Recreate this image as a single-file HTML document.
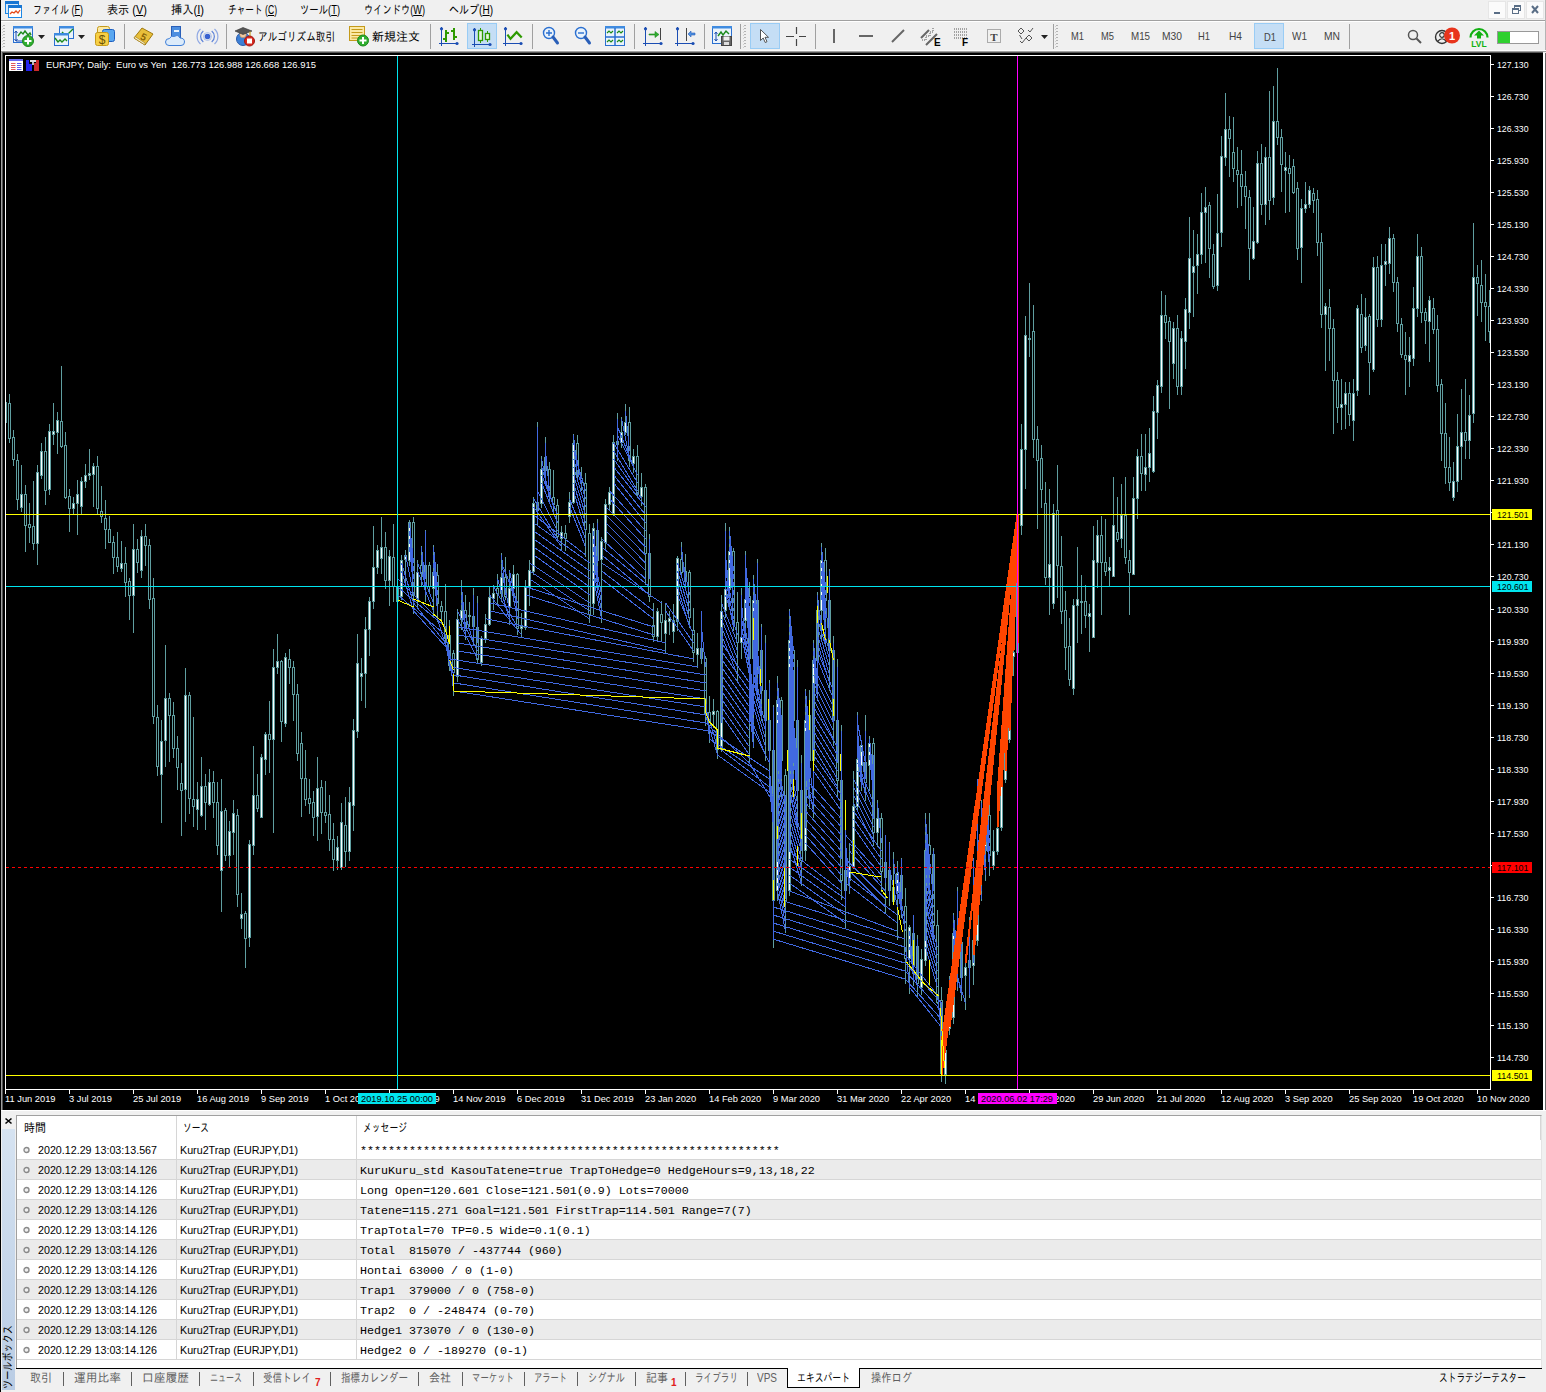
<!DOCTYPE html>
<html lang="ja"><head><meta charset="utf-8"><title>EURJPY,Daily</title>
<style>
html,body{margin:0;padding:0;}
body{width:1546px;height:1392px;position:relative;overflow:hidden;background:#f0f0f0;font-family:'Liberation Sans','IPAGothic',sans-serif;}
.t{position:absolute;white-space:pre;transform-origin:0 0;display:block;}
svg{position:absolute;overflow:visible;}
</style></head><body>
<div style="position:absolute;left:0px;top:0px;width:1546px;height:1392px;background:#f0f0f0;"></div>
<div style="position:absolute;left:1px;top:20px;width:1545px;height:1px;background:#a0a0a0;"></div>
<div style="position:absolute;left:1px;top:21px;width:1545px;height:1px;background:#ffffff;"></div>
<div style="position:absolute;left:0px;top:0px;width:1px;height:1392px;background:#000;"></div>
<svg style="left:5px;top:1px" width="18" height="18" viewBox="0 0 18 18">
<rect x="0.5" y="0.5" width="13" height="12" fill="#dbeaf8" stroke="#1e88e5"/><rect x="0" y="0" width="14" height="3" fill="#1976d2"/>
<rect x="3.5" y="4.5" width="13" height="12" fill="#ffffff" stroke="#1e88e5"/><rect x="3" y="4" width="14" height="3" fill="#1976d2"/>
<polyline points="5,13 7,11 9,12 11,10 13,12 15,9" fill="none" stroke="#e64a19" stroke-width="1.3"/></svg>
<div style="position:absolute;left:1488px;top:1px;width:18px;height:18px;background:#fbfbfb;border:1px solid #e6e6e6;box-sizing:border-box;"></div>
<div style="position:absolute;left:1507px;top:1px;width:18px;height:18px;background:#fbfbfb;border:1px solid #e6e6e6;box-sizing:border-box;"></div>
<div style="position:absolute;left:1526px;top:1px;width:18px;height:18px;background:#fbfbfb;border:1px solid #e6e6e6;box-sizing:border-box;"></div>
<div style="position:absolute;left:1545px;top:0px;width:1px;height:52px;background:#b4b4b4;"></div>
<svg style="left:1489px;top:2px" width="56" height="16" viewBox="0 0 56 16">
<rect x="5" y="10" width="6" height="2" fill="#5a6e86"/>
<rect x="25.5" y="3.5" width="6" height="5" fill="none" stroke="#5a6e86"/><rect x="25" y="3" width="7" height="2" fill="#5a6e86"/>
<rect x="23.5" y="6.5" width="6" height="5" fill="#fafafa" stroke="#5a6e86"/><rect x="23" y="6" width="7" height="2" fill="#5a6e86"/>
<path d="M43 4 L49 11 M49 4 L43 11" stroke="#5a6e86" stroke-width="2"/></svg>
<svg style="left:2px;top:25px" width="3" height="24" viewBox="0 0 3 24" ><rect x="1" y="0" width="2" height="1" fill="#b4b4b4"/><rect x="0" y="1" width="1" height="1" fill="#d0d0d0"/><rect x="1" y="3" width="2" height="1" fill="#b4b4b4"/><rect x="0" y="4" width="1" height="1" fill="#d0d0d0"/><rect x="1" y="6" width="2" height="1" fill="#b4b4b4"/><rect x="0" y="7" width="1" height="1" fill="#d0d0d0"/><rect x="1" y="9" width="2" height="1" fill="#b4b4b4"/><rect x="0" y="10" width="1" height="1" fill="#d0d0d0"/><rect x="1" y="12" width="2" height="1" fill="#b4b4b4"/><rect x="0" y="13" width="1" height="1" fill="#d0d0d0"/><rect x="1" y="15" width="2" height="1" fill="#b4b4b4"/><rect x="0" y="16" width="1" height="1" fill="#d0d0d0"/><rect x="1" y="18" width="2" height="1" fill="#b4b4b4"/><rect x="0" y="19" width="1" height="1" fill="#d0d0d0"/><rect x="1" y="21" width="2" height="1" fill="#b4b4b4"/><rect x="0" y="22" width="1" height="1" fill="#d0d0d0"/></svg>
<svg style="left:743px;top:25px" width="3" height="24" viewBox="0 0 3 24" ><rect x="1" y="0" width="2" height="1" fill="#b4b4b4"/><rect x="0" y="1" width="1" height="1" fill="#d0d0d0"/><rect x="1" y="3" width="2" height="1" fill="#b4b4b4"/><rect x="0" y="4" width="1" height="1" fill="#d0d0d0"/><rect x="1" y="6" width="2" height="1" fill="#b4b4b4"/><rect x="0" y="7" width="1" height="1" fill="#d0d0d0"/><rect x="1" y="9" width="2" height="1" fill="#b4b4b4"/><rect x="0" y="10" width="1" height="1" fill="#d0d0d0"/><rect x="1" y="12" width="2" height="1" fill="#b4b4b4"/><rect x="0" y="13" width="1" height="1" fill="#d0d0d0"/><rect x="1" y="15" width="2" height="1" fill="#b4b4b4"/><rect x="0" y="16" width="1" height="1" fill="#d0d0d0"/><rect x="1" y="18" width="2" height="1" fill="#b4b4b4"/><rect x="0" y="19" width="1" height="1" fill="#d0d0d0"/><rect x="1" y="21" width="2" height="1" fill="#b4b4b4"/><rect x="0" y="22" width="1" height="1" fill="#d0d0d0"/></svg>
<svg style="left:1055px;top:25px" width="3" height="24" viewBox="0 0 3 24" ><rect x="1" y="0" width="2" height="1" fill="#b4b4b4"/><rect x="0" y="1" width="1" height="1" fill="#d0d0d0"/><rect x="1" y="3" width="2" height="1" fill="#b4b4b4"/><rect x="0" y="4" width="1" height="1" fill="#d0d0d0"/><rect x="1" y="6" width="2" height="1" fill="#b4b4b4"/><rect x="0" y="7" width="1" height="1" fill="#d0d0d0"/><rect x="1" y="9" width="2" height="1" fill="#b4b4b4"/><rect x="0" y="10" width="1" height="1" fill="#d0d0d0"/><rect x="1" y="12" width="2" height="1" fill="#b4b4b4"/><rect x="0" y="13" width="1" height="1" fill="#d0d0d0"/><rect x="1" y="15" width="2" height="1" fill="#b4b4b4"/><rect x="0" y="16" width="1" height="1" fill="#d0d0d0"/><rect x="1" y="18" width="2" height="1" fill="#b4b4b4"/><rect x="0" y="19" width="1" height="1" fill="#d0d0d0"/><rect x="1" y="21" width="2" height="1" fill="#b4b4b4"/><rect x="0" y="22" width="1" height="1" fill="#d0d0d0"/></svg>
<div style="position:absolute;left:124px;top:24px;width:1px;height:25px;background:#a0a0a0;"></div>
<div style="position:absolute;left:226px;top:24px;width:1px;height:25px;background:#a0a0a0;"></div>
<div style="position:absolute;left:430px;top:24px;width:1px;height:25px;background:#a0a0a0;"></div>
<div style="position:absolute;left:532px;top:24px;width:1px;height:25px;background:#a0a0a0;"></div>
<div style="position:absolute;left:634px;top:24px;width:1px;height:25px;background:#a0a0a0;"></div>
<div style="position:absolute;left:704px;top:24px;width:1px;height:25px;background:#a0a0a0;"></div>
<div style="position:absolute;left:740px;top:24px;width:1px;height:25px;background:#a0a0a0;"></div>
<div style="position:absolute;left:815px;top:24px;width:1px;height:25px;background:#a0a0a0;"></div>
<div style="position:absolute;left:1053px;top:24px;width:1px;height:25px;background:#a0a0a0;"></div>
<div style="position:absolute;left:1349px;top:24px;width:1px;height:25px;background:#a0a0a0;"></div>
<svg style="left:38px;top:35px" width="7" height="4" viewBox="0 0 7 4" ><path d="M0 0H7L3.5 4Z" fill="#222"/></svg>
<svg style="left:78px;top:35px" width="7" height="4" viewBox="0 0 7 4" ><path d="M0 0H7L3.5 4Z" fill="#222"/></svg>
<svg style="left:1041px;top:35px" width="7" height="4" viewBox="0 0 7 4" ><path d="M0 0H7L3.5 4Z" fill="#222"/></svg>
<svg style="left:13px;top:26px" width="21" height="21" viewBox="0 0 21 21" ><rect x="0.5" y="0.5" width="19" height="16" fill="#eaf3fb" stroke="#2a6fd0"/><rect x="0" y="0" width="20" height="2.5" fill="#3f8be0"/>
<path d="M3 5V15M1.5 7L3 5L4.5 7M1.5 13L3 15L4.5 13" stroke="#1d4fb0" fill="none"/><path d="M3 15H12" stroke="#1d4fb0"/>
<polyline points="5,10 8,6 10,8 12,5 15,9 17,7 18,9" fill="none" stroke="#1c8a1c" stroke-width="1.4"/>
<circle cx="15" cy="15" r="5.5" fill="#2fae2f" stroke="#1e8a1e"/><path d="M15 11.5V18.5M11.5 15H18.5" stroke="#fff" stroke-width="2"/></svg>
<svg style="left:54px;top:26px" width="21" height="21" viewBox="0 0 21 21" ><rect x="5.5" y="0.5" width="14" height="12" fill="#eaf3fb" stroke="#2a6fd0"/><rect x="5" y="0" width="15" height="2.5" fill="#3f8be0"/>
<polyline points="8,6 11,9 14,8 19,3" fill="none" stroke="#1c8a1c" stroke-width="1.4"/>
<rect x="0.5" y="7.5" width="14" height="12" fill="#eaf3fb" stroke="#2a6fd0"/><rect x="0" y="7" width="15" height="2.5" fill="#3f8be0"/>
<polyline points="1,12 4,16 6,14 8,16 11,13 13,15" fill="none" stroke="#1c8a1c" stroke-width="1.4"/></svg>
<svg style="left:95px;top:26px" width="21" height="21" viewBox="0 0 21 21" ><rect x="2.5" y="0.5" width="12" height="12" rx="2" fill="#fbe9a6" stroke="#c49a1a"/>
<rect x="7.5" y="3.5" width="12" height="12" rx="2" fill="#5aa7f0" stroke="#1d5fc0"/>
<rect x="0.5" y="6.5" width="13" height="13" rx="2" fill="#f7cf45" stroke="#c49a1a"/>
<text x="7" y="17.5" font-family="Liberation Sans, sans-serif" font-size="12" text-anchor="middle" fill="#6b5208">$</text></svg>
<svg style="left:133px;top:26px" width="21" height="21" viewBox="0 0 21 21" ><path d="M1 12L9 2L20 8L12 19Z" fill="#e8bf3a" stroke="#a07a10"/><path d="M1 12L12 19L12 17L2 10.5Z" fill="#f6ecc8" stroke="#a07a10" stroke-width="0.6"/>
<text x="10.5" y="14.5" font-family="Liberation Sans, sans-serif" font-size="10" font-weight="bold" text-anchor="middle" fill="#8a6408" transform="rotate(28 10.5 11)">5</text></svg>
<svg style="left:165px;top:26px" width="21" height="21" viewBox="0 0 21 21" ><rect x="6.500" y="0.500" width="9" height="11" fill="#4d8fe0" stroke="#2a5fb8"/><rect x="9" y="4" width="5" height="2" fill="#eaf3fb"/>
<path d="M4 19.500Q0.500 19.500 0.500 16Q0.500 12.500 4.500 12.500Q6 9 9.500 10.500Q13 8 15 12Q19.500 12 19.500 16Q19.500 19.500 16 19.500Z" fill="#dcebfa" stroke="#3f7fd8"/></svg>
<svg style="left:197px;top:26px" width="21" height="21" viewBox="0 0 21 21" ><circle cx="10.5" cy="10.5" r="2.8" fill="#3a62d0"/><circle cx="10.5" cy="10.5" r="4" fill="none" stroke="#9db4e8" stroke-width="0.8"/>
<path d="M6.300 5A7 7 0 0 0 6.300 16M14.700 5A7 7 0 0 1 14.700 16" fill="none" stroke="#5d82d8" stroke-width="1.2"/>
<path d="M3.500 3A10 10 0 0 0 3.500 18M17.500 3A10 10 0 0 1 17.500 18" fill="none" stroke="#8fa8e4" stroke-width="1.2"/></svg>
<svg style="left:234px;top:26px" width="22" height="21" viewBox="0 0 22 21" ><circle cx="9" cy="13" r="6.5" fill="#3b7fd6" stroke="#2a5aa8"/><circle cx="9" cy="8.500" r="3.200" fill="#f2c9a0" stroke="#b98a58" stroke-width="0.6"/>
<path d="M1 5L9 1.500L18 5L9 8.500Z" fill="#555" stroke="#333" stroke-width="0.6"/><path d="M16 5.500V10" stroke="#caa21a" stroke-width="1.2"/>
<circle cx="15.500" cy="15" r="5" fill="#d8281e" stroke="#a01810"/><rect x="13" y="12.500" width="5" height="5" fill="#fff"/></svg>
<svg style="left:349px;top:26px" width="21" height="21" viewBox="0 0 21 21" ><rect x="0.500" y="0.500" width="15" height="14" fill="#fbe9a6" stroke="#c49a1a"/>
<path d="M2.500 3.500H13.500M2.500 6.500H13.500M2.500 9.500H13.500M2.500 12H9" stroke="#c49a1a"/>
<circle cx="14" cy="14.500" r="5.500" fill="#2fae2f" stroke="#1e8a1e"/><path d="M14 11V18M10.500 14.500H17.500" stroke="#fff" stroke-width="2"/></svg>
<svg style="left:439px;top:26px" width="21" height="21" viewBox="0 0 21 21" ><path d="M2.500 1V20M0 17.500H19" stroke="#1a4db3"/><circle cx="2.500" cy="2.800" r="1.600" fill="#1a4db3"/><circle cx="18" cy="17.500" r="1.600" fill="#1a4db3"/>
<path d="M7 4V16M8 7H10M4 13H6M15 2V14M12 5H14M16 11H18" stroke="#2e9a00" stroke-width="2"/></svg>
<div style="position:absolute;left:467px;top:23px;width:30px;height:26px;background:#c5def5;border:1px solid #99ccf5;box-sizing:border-box;"></div>
<svg style="left:472px;top:27px" width="21" height="21" viewBox="0 0 21 21" ><path d="M2.500 1V20M0 17.500H19" stroke="#1a4db3"/><circle cx="2.500" cy="2.800" r="1.600" fill="#1a4db3"/><circle cx="18" cy="17.500" r="1.600" fill="#1a4db3"/>
<path d="M8.500 1V16M15.500 4V15" stroke="#2e9a00"/><rect x="6.500" y="3.500" width="4" height="10" fill="#e8f5e0" stroke="#2e9a00" stroke-width="1.300"/><rect x="13.500" y="6.500" width="4" height="6" fill="#e8f5e0" stroke="#2e9a00" stroke-width="1.300"/></svg>
<svg style="left:503px;top:26px" width="21" height="21" viewBox="0 0 21 21" ><path d="M2.500 1V20M0 17.500H19" stroke="#1a4db3"/><circle cx="2.500" cy="2.800" r="1.600" fill="#1a4db3"/><circle cx="18" cy="17.500" r="1.600" fill="#1a4db3"/>
<polyline points="4.400,8.700 7.500,12.800 13.600,6.200 18.700,11.500" fill="none" stroke="#2e9a00" stroke-width="2.200"/></svg>
<svg style="left:542px;top:26px" width="18" height="21" viewBox="0 0 18 21" ><circle cx="7" cy="7" r="5.500" fill="#eaf3fb" stroke="#2a6fd0" stroke-width="1.400"/><path d="M11 11L15.500 17" stroke="#2a5fb8" stroke-width="3" stroke-linecap="round"/>
<path d="M4 7H10M7 4V10" stroke="#2a6fd0" stroke-width="1.400"/></svg>
<svg style="left:574px;top:26px" width="18" height="21" viewBox="0 0 18 21" ><circle cx="7" cy="7" r="5.500" fill="#eaf3fb" stroke="#2a6fd0" stroke-width="1.400"/><path d="M11 11L15.500 17" stroke="#2a5fb8" stroke-width="3" stroke-linecap="round"/>
<path d="M4 7H10" stroke="#2a6fd0" stroke-width="1.400"/></svg>
<svg style="left:605px;top:26px" width="21" height="21" viewBox="0 0 21 21" ><rect x="0.500" y="0.500" width="19" height="19" fill="#eaf3fb" stroke="#2a6fd0"/><rect x="0" y="0" width="20" height="2.500" fill="#3f8be0"/>
<path d="M10 2V20M0 11H20" stroke="#2a6fd0" stroke-width="1.500"/>
<polyline points="2,7 4,5 6,7 8,5" fill="none" stroke="#1c8a1c" stroke-width="1.200"/><polyline points="12,7 14,5 16,7 18,5" fill="none" stroke="#1c8a1c" stroke-width="1.200"/>
<polyline points="2,16 4,14 6,16 8,14" fill="none" stroke="#1c8a1c" stroke-width="1.200"/><polyline points="12,16 14,14 16,16 18,14" fill="none" stroke="#1c8a1c" stroke-width="1.200"/></svg>
<svg style="left:643px;top:26px" width="22" height="21" viewBox="0 0 22 21" ><path d="M2.500 1V20M0 17.500H19" stroke="#1a4db3"/><circle cx="2.500" cy="2.800" r="1.600" fill="#1a4db3"/><circle cx="18" cy="17.500" r="1.600" fill="#1a4db3"/>
<path d="M17.500 2V14" stroke="#444"/><path d="M6 8H12V5.500L16 8.500L12 11.500V9H6Z" fill="#2fae2f" stroke="#1e8a1e" stroke-width="0.600"/></svg>
<svg style="left:675px;top:26px" width="22" height="21" viewBox="0 0 22 21" ><path d="M2.500 1V20M0 17.500H19" stroke="#1a4db3"/><circle cx="2.500" cy="2.800" r="1.600" fill="#1a4db3"/><circle cx="18" cy="17.500" r="1.600" fill="#1a4db3"/>
<path d="M11.500 2V15" stroke="#444"/><path d="M20 7H16V5L13 8L16 11V9H20Z" fill="#4d8fe0" stroke="#2a5fb8" stroke-width="0.600"/></svg>
<svg style="left:712px;top:26px" width="22" height="21" viewBox="0 0 22 21" ><rect x="0.500" y="0.500" width="19" height="17" fill="#eaf3fb" stroke="#2a6fd0"/><rect x="0" y="0" width="20" height="2.500" fill="#3f8be0"/>
<path d="M4 6V15M2.500 8L4 6L5.500 8M2.500 13L4 15L5.500 13" stroke="#1d4fb0" fill="none"/>
<polyline points="6,10 9,6 11,9 14,5 17,8" fill="none" stroke="#1c8a1c" stroke-width="1.400"/>
<rect x="9.500" y="10.500" width="10" height="9" fill="#666" stroke="#444"/><rect x="11.500" y="10.500" width="6" height="4" fill="#eee"/><rect x="12" y="16" width="5" height="3" fill="#ddd"/></svg>
<div style="position:absolute;left:750px;top:23px;width:30px;height:26px;background:#c5def5;border:1px solid #99ccf5;box-sizing:border-box;"></div>
<svg style="left:759px;top:29px" width="12" height="16" viewBox="0 0 12 16" ><path d="M1.500 0.500V11.500L4.200 9L6.200 13.500L8 12.700L6 8.300H9.500Z" fill="#fff" stroke="#444" stroke-width="0.900"/></svg>
<svg style="left:786px;top:26px" width="21" height="21" viewBox="0 0 21 21" ><path d="M10.500 1V8M10.500 13V20M0 10.500H8M13 10.500H20" stroke="#444" stroke-width="1.200"/></svg>
<div style="position:absolute;left:833px;top:29px;width:2px;height:14px;background:#666;"></div>
<div style="position:absolute;left:859px;top:35px;width:14px;height:2px;background:#666;"></div>
<svg style="left:891px;top:29px" width="14" height="14" viewBox="0 0 14 14" shape-rendering="geometricPrecision"><path d="M1 13L13 1" stroke="#666" stroke-width="2"/></svg>
<svg style="left:920px;top:26px" width="22" height="21" viewBox="0 0 22 21" ><path d="M1 12L9 4M6 19L17 8" stroke="#666" stroke-width="2"/><path d="M2 14L6 14L6 10L10 10L10 6L13 6L13 1" fill="none" stroke="#555" stroke-dasharray="1 1"/>
<text x="14" y="20" font-family="Liberation Sans, sans-serif" font-size="10" font-weight="bold" fill="#000">E</text></svg>
<svg style="left:954px;top:28px" width="17" height="18" viewBox="0 0 17 18" ><path d="M0 1H13M0 4H13M0 7H13M0 10H13" stroke="#555" stroke-dasharray="1 1"/>
<text x="8" y="18" font-family="Liberation Sans, sans-serif" font-size="10" font-weight="bold" fill="#000">F</text></svg>
<svg style="left:987px;top:29px" width="15" height="15" viewBox="0 0 15 15" ><rect x="0.500" y="0.500" width="13" height="13" fill="none" stroke="#666" stroke-dasharray="1 1"/>
<text x="7" y="11.500" font-family="Liberation Serif, serif" font-size="11" font-weight="bold" text-anchor="middle" fill="#444">T</text></svg>
<svg style="left:1017px;top:27px" width="18" height="18" viewBox="0 0 18 18" ><path d="M1 4L4 1L7 4L4 7Z M2.500 8L5 12" fill="none" stroke="#555"/><path d="M9 11L12 8L15 11L12 14Z" fill="none" stroke="#555"/>
<path d="M3 14L5 16L9 11" fill="none" stroke="#555"/><path d="M11 3L13 5L16 1" fill="none" stroke="#555"/></svg>
<div style="position:absolute;left:1254px;top:23px;width:30px;height:26px;background:#c5def5;border:1px solid #99ccf5;box-sizing:border-box;"></div>
<svg style="left:1407px;top:29px" width="16" height="16" viewBox="0 0 16 16" ><circle cx="6" cy="6" r="4.500" fill="none" stroke="#555" stroke-width="1.500"/><path d="M9.500 9.500L14 14" stroke="#555" stroke-width="2"/></svg>
<svg style="left:1434px;top:27px" width="28" height="20" viewBox="0 0 28 20" ><circle cx="8" cy="10" r="6.500" fill="none" stroke="#333" stroke-width="1.400"/><circle cx="8" cy="8" r="2.300" fill="none" stroke="#333" stroke-width="1.200"/>
<path d="M3.500 14.500Q8 9 12.500 14.500" fill="none" stroke="#333" stroke-width="1.200"/>
<circle cx="18" cy="8.500" r="8" fill="#e8341c"/><text x="18" y="12.500" font-family="Liberation Sans, sans-serif" font-size="11" font-weight="bold" text-anchor="middle" fill="#fff">1</text></svg>
<svg style="left:1469px;top:26px" width="20" height="22" viewBox="0 0 20 22" shape-rendering="geometricPrecision"><path d="M1.500 11.500A8.500 8.500 0 0 1 18.500 11.500" fill="none" stroke="#12b012" stroke-width="2.200"/><path d="M10 4.500L5 9.500H8V12.500H12V9.500H15Z" fill="#12b012"/>
<text x="10" y="21" font-family="Liberation Sans, sans-serif" font-size="8.500" font-weight="bold" text-anchor="middle" fill="#12b012">LVL</text></svg>
<div style="position:absolute;left:1497px;top:31px;width:42px;height:13px;background:#fff;border:1px solid #999;box-sizing:border-box;"></div>
<div style="position:absolute;left:1498px;top:32px;width:12px;height:11px;background:#2fd02f;"></div>
<div style="position:absolute;left:1px;top:50px;width:1545px;height:1px;background:#fafafa;"></div>
<div style="position:absolute;left:1px;top:51px;width:1545px;height:1px;background:#a0a0a0;"></div>
<div style="position:absolute;left:2px;top:52px;width:1541px;height:1px;background:#555;"></div>
<div style="position:absolute;left:2px;top:53px;width:1541px;height:1057px;background:#000;"></div>
<div style="position:absolute;left:1px;top:52px;width:1px;height:1058px;background:#a0a0a0;"></div>
<div style="position:absolute;left:2px;top:53px;width:1px;height:1057px;background:#555;"></div>
<div style="position:absolute;left:1543px;top:53px;width:2px;height:1057px;background:#fff;"></div>
<div style="position:absolute;left:1545px;top:53px;width:1px;height:1057px;background:#696969;"></div>
<div style="position:absolute;left:1px;top:1110px;width:1545px;height:1px;background:#fff;"></div>
<svg style="left:0;top:0" width="1546" height="1392" viewBox="0 0 1546 1392" shape-rendering="crispEdges"><path d="M5.500 1089.500V55.500H1490.500V1089.500Z" fill="none" stroke="#fff"/><path d="M1491 64.5h3M1491 96.5h3M1491 128.5h3M1491 160.5h3M1491 192.5h3M1491 224.5h3M1491 256.5h3M1491 288.5h3M1491 320.5h3M1491 352.5h3M1491 384.5h3M1491 416.5h3M1491 448.5h3M1491 480.5h3M1491 512.5h3M1491 544.5h3M1491 576.5h3M1491 609.5h3M1491 641.5h3M1491 673.5h3M1491 705.5h3M1491 737.5h3M1491 769.5h3M1491 801.5h3M1491 833.5h3M1491 865.5h3M1491 897.5h3M1491 929.5h3M1491 961.5h3M1491 993.5h3M1491 1025.5h3M1491 1057.5h3" stroke="#fff"/><path d="M5.5 1090v4M69.5 1090v4M133.5 1090v4M197.5 1090v4M261.5 1090v4M325.5 1090v4M389.5 1090v4M453.5 1090v4M517.5 1090v4M581.5 1090v4M645.5 1090v4M709.5 1090v4M773.5 1090v4M837.5 1090v4M901.5 1090v4M965.5 1090v4M1029.5 1090v4M1093.5 1090v4M1157.5 1090v4M1221.5 1090v4M1285.5 1090v4M1349.5 1090v4M1413.5 1090v4M1477.5 1090v4" stroke="#fff"/><svg x="6" y="56" width="1484" height="1033" viewBox="6 56 1484 1033" style="overflow:hidden;position:static"><path d="M4 402h3v21h-3zM8 403h3v36h-3zM12 437h3v23h-3zM16 460h3v40h-3zM20 494h3v14h-3zM24 494h3v32h-3zM28 524h3v4h-3zM32 526h3v18h-3zM36 472h3v72h-3zM40 451h3v25h-3zM44 451h3v40h-3zM48 431h3v59h-3zM52 431h3v4h-3zM56 420h3v13h-3zM60 421h3v26h-3zM64 445h3v53h-3zM68 496h3v13h-3zM72 503h3v6h-3zM76 494h3v10h-3zM80 481h3v26h-3zM84 475h3v7h-3zM88 473h3v3h-3zM92 466h3v9h-3zM96 466h3v43h-3zM100 511h3v6h-3zM104 518h3v12h-3zM108 529h3v14h-3zM112 542h3v16h-3zM116 557h3v10h-3zM120 563h3v6h-3zM124 563h3v20h-3zM128 581h3v15h-3zM132 549h3v47h-3zM136 549h3v14h-3zM140 536h3v35h-3zM144 536h3v10h-3zM148 545h3v55h-3zM152 598h3v119h-3zM156 717h3v50h-3zM160 741h3v34h-3zM164 698h3v43h-3zM168 698h3v18h-3zM172 715h3v34h-3zM176 748h3v20h-3zM180 783h3v8h-3zM184 695h3v95h-3zM188 695h3v104h-3zM192 799h3v8h-3zM196 799h3v11h-3zM200 786h3v30h-3zM204 786h3v17h-3zM208 782h3v23h-3zM212 782h3v21h-3zM216 802h3v44h-3zM220 811h3v60h-3zM224 810h3v46h-3zM228 831h3v25h-3zM232 813h3v20h-3zM236 815h3v80h-3zM240 914h3v5h-3zM244 913h3v26h-3zM248 844h3v94h-3zM252 795h3v51h-3zM256 795h3v14h-3zM260 757h3v61h-3zM264 734h3v26h-3zM268 734h3v6h-3zM272 667h3v73h-3zM276 661h3v7h-3zM280 661h3v61h-3zM284 657h3v67h-3zM288 659h3v9h-3zM292 667h3v28h-3zM296 694h3v60h-3zM300 743h3v36h-3zM304 778h3v22h-3zM308 798h3v6h-3zM312 802h3v16h-3zM316 788h3v29h-3zM320 787h3v26h-3zM324 812h3v4h-3zM328 814h3v26h-3zM332 839h3v21h-3zM336 847h3v14h-3zM340 822h3v46h-3zM344 825h3v27h-3zM348 802h3v50h-3zM352 730h3v76h-3zM356 663h3v69h-3zM360 673h3v4h-3zM364 629h3v45h-3zM368 601h3v29h-3zM372 567h3v35h-3zM376 550h3v18h-3zM380 547h3v12h-3zM384 547h3v34h-3zM388 556h3v25h-3zM392 557h3v30h-3zM396 586h3v16h-3zM400 560h3v37h-3zM404 555h3v5h-3zM408 522h3v39h-3zM412 522h3v74h-3zM416 572h3v27h-3zM420 565h3v9h-3zM424 565h3v22h-3zM428 565h3v22h-3zM432 572h3v17h-3zM436 575h3v29h-3zM440 606h3v6h-3zM444 611h3v28h-3zM448 635h3v31h-3zM452 653h3v20h-3zM456 619h3v58h-3zM460 610h3v10h-3zM464 610h3v21h-3zM468 615h3v2h-3zM472 616h3v11h-3zM476 627h3v33h-3zM480 638h3v25h-3zM484 624h3v15h-3zM488 597h3v28h-3zM492 593h3v6h-3zM496 588h3v6h-3zM500 577h3v17h-3zM504 577h3v20h-3zM508 588h3v19h-3zM512 574h3v15h-3zM516 574h3v55h-3zM520 626h3v3h-3zM524 587h3v41h-3zM528 570h3v18h-3zM532 503h3v69h-3zM536 502h3v9h-3zM540 469h3v35h-3zM544 457h3v14h-3zM548 469h3v28h-3zM552 497h3v8h-3zM556 505h3v32h-3zM560 532h3v7h-3zM564 533h3v6h-3zM568 502h3v15h-3zM572 443h3v60h-3zM576 443h3v32h-3zM580 478h3v5h-3zM584 483h3v47h-3zM588 533h3v82h-3zM592 528h3v76h-3zM596 530h3v31h-3zM600 541h3v19h-3zM604 504h3v39h-3zM608 492h3v13h-3zM612 442h3v72h-3zM616 441h3v4h-3zM620 432h3v11h-3zM624 422h3v11h-3zM628 422h3v39h-3zM632 456h3v8h-3zM636 456h3v39h-3zM640 487h3v10h-3zM644 487h3v67h-3zM648 553h3v44h-3zM652 625h3v12h-3zM656 611h3v26h-3zM660 614h3v9h-3zM664 620h3v14h-3zM668 618h3v4h-3zM672 620h3v12h-3zM676 558h3v64h-3zM680 559h3v14h-3zM684 571h3v7h-3zM688 572h3v46h-3zM692 630h3v23h-3zM696 648h3v7h-3zM700 648h3v11h-3zM704 658h3v56h-3zM708 712h3v14h-3zM712 711h3v4h-3zM716 711h3v39h-3zM720 611h3v138h-3zM724 589h3v22h-3zM728 551h3v39h-3zM732 551h3v72h-3zM736 622h3v21h-3zM740 637h3v6h-3zM744 599h3v22h-3zM748 596h3v63h-3zM752 600h3v59h-3zM756 600h3v51h-3zM760 650h3v41h-3zM764 690h3v31h-3zM768 720h3v31h-3zM772 750h3v151h-3zM776 700h3v191h-3zM780 700h3v61h-3zM784 775h3v126h-3zM788 640h3v251h-3zM792 650h3v71h-3zM796 720h3v71h-3zM800 790h3v71h-3zM804 720h3v131h-3zM808 715h3v46h-3zM812 660h3v101h-3zM816 610h3v51h-3zM820 560h3v51h-3zM824 560h3v41h-3zM828 600h3v51h-3zM832 650h3v71h-3zM836 720h3v61h-3zM840 780h3v101h-3zM844 870h3v21h-3zM848 866h3v15h-3zM852 806h3v61h-3zM856 759h3v48h-3zM860 745h3v21h-3zM864 762h3v21h-3zM868 743h3v23h-3zM872 743h3v90h-3zM876 818h3v15h-3zM880 818h3v54h-3zM884 862h3v16h-3zM888 870h3v21h-3zM892 887h3v15h-3zM896 873h3v20h-3zM900 875h3v24h-3zM904 906h3v53h-3zM908 927h3v32h-3zM912 933h3v33h-3zM916 946h3v38h-3zM920 959h3v29h-3zM924 850h3v111h-3zM928 845h3v10h-3zM932 854h3v72h-3zM936 925h3v78h-3zM940 1000h3v74h-3zM944 1050h3v25h-3zM948 1020h3v9h-3zM952 933h3v85h-3zM956 933h3v30h-3zM960 942h3v36h-3zM964 967h3v9h-3zM968 960h3v8h-3zM972 940h3v26h-3zM976 870h3v71h-3zM980 850h3v23h-3zM984 830h3v21h-3zM988 815h3v41h-3zM992 851h3v15h-3zM996 828h3v24h-3zM1000 779h3v49h-3zM1004 739h3v41h-3zM1008 656h3v84h-3zM1012 652h3v5h-3zM1016 525h3v128h-3zM1020 449h3v77h-3zM1024 335h3v115h-3zM1028 338h3v2h-3zM1032 331h3v109h-3zM1036 439h3v22h-3zM1040 458h3v32h-3zM1044 503h3v75h-3zM1048 564h3v14h-3zM1052 513h3v91h-3zM1056 510h3v56h-3zM1060 566h3v46h-3zM1064 610h3v38h-3zM1068 646h3v34h-3zM1072 605h3v84h-3zM1076 599h3v7h-3zM1080 601h3v2h-3zM1084 601h3v15h-3zM1088 613h3v4h-3zM1092 560h3v78h-3zM1096 535h3v28h-3zM1100 535h3v28h-3zM1104 562h3v10h-3zM1108 567h3v4h-3zM1112 525h3v52h-3zM1116 532h3v8h-3zM1120 515h3v24h-3zM1124 515h3v43h-3zM1128 560h3v13h-3zM1132 498h3v77h-3zM1136 456h3v43h-3zM1140 456h3v18h-3zM1144 467h3v8h-3zM1148 453h3v15h-3zM1152 411h3v61h-3zM1156 385h3v28h-3zM1160 315h3v72h-3zM1164 315h3v8h-3zM1168 321h3v21h-3zM1172 328h3v36h-3zM1176 328h3v59h-3zM1180 338h3v49h-3zM1184 309h3v33h-3zM1188 258h3v55h-3zM1192 266h3v7h-3zM1196 254h3v12h-3zM1200 212h3v43h-3zM1204 207h3v6h-3zM1208 205h3v44h-3zM1212 254h3v33h-3zM1216 233h3v53h-3zM1220 156h3v77h-3zM1224 129h3v29h-3zM1228 129h3v10h-3zM1232 152h3v17h-3zM1236 170h3v5h-3zM1240 174h3v13h-3zM1244 186h3v11h-3zM1248 197h3v52h-3zM1252 241h3v18h-3zM1256 163h3v80h-3zM1260 163h3v42h-3zM1264 157h3v48h-3zM1268 157h3v44h-3zM1272 121h3v77h-3zM1276 121h3v17h-3zM1280 137h3v28h-3zM1284 167h3v4h-3zM1288 168h3v6h-3zM1292 166h3v27h-3zM1296 188h3v61h-3zM1300 208h3v40h-3zM1304 204h3v5h-3zM1308 190h3v15h-3zM1312 193h3v8h-3zM1316 199h3v44h-3zM1320 242h3v73h-3zM1324 306h3v9h-3zM1328 307h3v22h-3zM1332 328h3v53h-3zM1336 380h3v28h-3zM1340 404h3v4h-3zM1344 393h3v12h-3zM1348 393h3v22h-3zM1352 393h3v28h-3zM1356 308h3v83h-3zM1360 314h3v34h-3zM1364 317h3v29h-3zM1368 316h3v47h-3zM1372 267h3v103h-3zM1376 267h3v53h-3zM1380 265h3v55h-3zM1384 261h3v4h-3zM1388 238h3v26h-3zM1392 238h3v45h-3zM1396 282h3v42h-3zM1400 324h3v31h-3zM1404 355h3v5h-3zM1408 355h3v7h-3zM1412 308h3v51h-3zM1416 256h3v53h-3zM1420 256h3v57h-3zM1424 312h3v9h-3zM1428 300h3v22h-3zM1432 308h3v22h-3zM1436 329h3v57h-3zM1440 384h3v50h-3zM1444 433h3v35h-3zM1448 467h3v16h-3zM1452 481h3v17h-3zM1456 446h3v36h-3zM1460 432h3v15h-3zM1464 432h3v9h-3zM1468 415h3v26h-3zM1472 277h3v137h-3zM1476 277h3v7h-3zM1480 285h3v18h-3zM1484 302h3v5h-3zM1488 306h3v26h-3z" fill="#5f9ea0"/><path d="M5.5 402V402M5.5 422V423M9.5 394V403M9.5 438V443M13.5 430V437M13.5 459V466M17.5 454V460M17.5 499V510M21.5 465V494M21.5 507V512M25.5 485V494M25.5 525V552M29.5 503V524M29.5 527V543M33.5 481V526M33.5 543V550M37.5 465V472M37.5 543V565M41.5 443V451M41.5 475V479M45.5 437V451M45.5 490V505M49.5 424V431M49.5 489V495M53.5 403V431M53.5 434V445M57.5 412V420M57.5 432V454M61.5 366V421M61.5 446V448M65.5 432V445M65.5 497V499M69.5 489V496M69.5 508V532M73.5 497V503M73.5 508V514M77.5 480V494M77.5 503V535M81.5 477V481M81.5 506V515M85.5 464V475M85.5 481V488M89.5 449V473M89.5 475V480M93.5 463V466M93.5 474V507M97.5 456V466M97.5 508V515M101.5 486V511M101.5 516V523M105.5 500V518M105.5 529V549M109.5 516V529M109.5 542V543M113.5 536V542M113.5 557V574M117.5 532V557M117.5 566V572M121.5 541V563M121.5 568V572M125.5 547V563M125.5 582V597M129.5 578V581M129.5 595V620M133.5 524V549M133.5 595V633M137.5 539V549M137.5 562V573M141.5 530V536M141.5 570V578M145.5 524V536M145.5 545V566M149.5 539V545M149.5 599V609M153.5 578V598M153.5 716V724M157.5 705V717M157.5 766V776M161.5 720V741M161.5 774V823M165.5 645V698M165.5 740V767M169.5 693V698M169.5 715V762M173.5 702V715M173.5 748V758M177.5 736V748M177.5 767V790M181.5 763V783M181.5 790V836M185.5 668V695M185.5 789V822M189.5 692V695M189.5 798V814M193.5 717V799M193.5 806V827M197.5 782V799M197.5 809V830M201.5 757V786M201.5 815V817M205.5 774V786M205.5 802V830M209.5 769V782M209.5 804V806M213.5 771V782M213.5 802V818M217.5 782V802M217.5 845V855M221.5 779V811M221.5 870V912M225.5 808V810M225.5 855V861M229.5 821V831M229.5 855V868M233.5 800V813M233.5 832V855M237.5 809V815M237.5 894V907M241.5 893V914M241.5 918V929M245.5 911V913M245.5 938V968M249.5 840V844M249.5 937V947M253.5 746V795M253.5 845V855M257.5 774V795M257.5 808V812M261.5 754V757M261.5 817V818M265.5 732V734M265.5 759V775M269.5 701V734M269.5 739V773M273.5 649V667M273.5 739V833M277.5 634V661M277.5 667V674M281.5 660V661M281.5 721V742M285.5 653V657M285.5 723V727M289.5 649V659M289.5 667V684M293.5 661V667M293.5 694V721M297.5 684V694M297.5 753V761M301.5 732V743M301.5 778V817M305.5 750V778M305.5 799V806M309.5 779V798M309.5 803V814M313.5 791V802M313.5 817V836M317.5 757V788M317.5 816V841M321.5 780V787M321.5 812V834M325.5 781V812M325.5 815V823M329.5 795V814M329.5 839V851M333.5 823V839M333.5 859V871M337.5 836V847M337.5 860V870M341.5 803V822M341.5 867V870M345.5 797V825M345.5 851V867M349.5 787V802M349.5 851V861M353.5 719V730M353.5 805V831M357.5 634V663M357.5 731V738M361.5 658V673M361.5 676V701M365.5 617V629M365.5 673V708M369.5 597V601M369.5 629V656M373.5 526V567M373.5 601V609M377.5 545V550M377.5 567V574M381.5 517V547M381.5 558V574M385.5 532V547M385.5 580V589M389.5 550V556M389.5 580V606M393.5 524V557M393.5 586V602M397.5 576V586M397.5 601V604M401.5 555V560M401.5 596V600M405.5 550V555M405.5 559V587M409.5 520V522M409.5 560V566M413.5 517V522M413.5 595V614M417.5 560V572M417.5 598V608M421.5 546V565M421.5 573V587M425.5 530V565M425.5 586V602M429.5 562V565M429.5 586V592M433.5 545V572M433.5 588V618M437.5 564V575M437.5 603V622M441.5 601V606M441.5 611V623M445.5 584V611M445.5 638V646M449.5 620V635M449.5 665V671M453.5 650V653M453.5 672V696M457.5 609V619M457.5 676V682M461.5 580V610M461.5 619V630M465.5 595V610M465.5 630V640M469.5 602V615M469.5 616V627M473.5 588V616M473.5 626V646M477.5 596V627M477.5 659V663M481.5 636V638M481.5 662V666M485.5 614V624M485.5 638V643M489.5 587V597M489.5 624V626M493.5 585V593M493.5 598V610M497.5 574V588M497.5 593V604M501.5 553V577M501.5 593V602M505.5 557V577M505.5 596V600M509.5 570V588M509.5 606V625M513.5 565V574M513.5 588V602M517.5 573V574M517.5 628V635M521.5 613V626M521.5 628V637M525.5 580V587M525.5 627V630M529.5 560V570M529.5 587V606M533.5 497V503M533.5 571V575M537.5 422V502M537.5 510V525M541.5 456V469M541.5 503V508M545.5 437V457M545.5 470V484M549.5 462V469M549.5 496V504M553.5 470V497M553.5 504V511M557.5 499V505M557.5 536V541M561.5 526V532M561.5 538V550M565.5 525V533M565.5 538V551M569.5 492V502M569.5 516V523M573.5 434V443M573.5 502V504M577.5 435V443M577.5 474V479M581.5 467V478M581.5 482V491M585.5 473V483M585.5 529V557M589.5 524V533M589.5 614V623M593.5 523V528M593.5 603V615M597.5 519V530M597.5 560V589M601.5 537V541M601.5 559V623M605.5 499V504M605.5 542V549M609.5 487V492M609.5 504V511M613.5 435V442M613.5 513V516M617.5 413V441M617.5 444V461M621.5 417V432M621.5 442V448M625.5 404V422M625.5 432V435M629.5 407V422M629.5 460V467M633.5 449V456M633.5 463V473M637.5 445V456M637.5 494V497M641.5 473V487M641.5 496V506M645.5 484V487M645.5 553V585M649.5 534V553M649.5 596V602M653.5 603V625M653.5 636V642M657.5 608V611M657.5 636V642M661.5 601V614M661.5 622V642M665.5 603V620M665.5 633V653M669.5 611V618M669.5 621V635M673.5 604V620M673.5 631V643M677.5 556V558M677.5 621V631M681.5 542V559M681.5 572V578M685.5 554V571M685.5 577V590M689.5 570V572M689.5 617V628M693.5 608V630M693.5 652V662M697.5 633V648M697.5 654V668M701.5 611V648M701.5 658V664M705.5 656V658M705.5 713V726M709.5 696V712M709.5 725V743M713.5 699V711M713.5 714V728M717.5 710V711M717.5 749V759M721.5 595V611M721.5 748V752M725.5 523V589M725.5 610V618M729.5 527V551M729.5 589V607M733.5 548V551M733.5 622V631M737.5 592V622M737.5 642V681M741.5 588V637M741.5 642V659M745.5 551V599M745.5 620V645M749.5 582V596M749.5 658V764M753.5 575V600M753.5 658V748M757.5 559V600M757.5 650V701M761.5 624V650M761.5 690V721M765.5 635V690M765.5 720V761M769.5 680V720M769.5 750V791M773.5 705V750M773.5 900V948M777.5 676V700M777.5 890V901M781.5 697V700M781.5 760V801M785.5 769V775M785.5 900V933M789.5 609V640M789.5 890V896M793.5 646V650M793.5 720V801M797.5 660V720M797.5 790V831M801.5 755V790M801.5 860V886M805.5 689V720M805.5 850V861M809.5 690V715M809.5 760V809M813.5 640V660M813.5 760V818M817.5 592V610M817.5 660V701M821.5 543V560M821.5 610V641M825.5 548V560M825.5 600V646M829.5 569V600M829.5 650V691M833.5 636V650M833.5 720V746M837.5 659V720M837.5 780V796M841.5 725V780M841.5 880V900M845.5 818V870M845.5 890V929M849.5 843V866M849.5 880V894M853.5 771V806M853.5 866V869M857.5 712V759M857.5 806V811M861.5 740V745M861.5 765V791M865.5 715V762M865.5 782V801M869.5 736V743M869.5 765V791M873.5 738V743M873.5 832V846M877.5 800V818M877.5 832V847M881.5 813V818M881.5 871V892M885.5 835V862M885.5 877V913M889.5 842V870M889.5 890V906M893.5 852V887M893.5 901V905M897.5 861V873M897.5 892V940M901.5 858V875M901.5 898V918M905.5 888V906M905.5 958V984M909.5 925V927M909.5 958V994M913.5 915V933M913.5 965V986M917.5 935V946M917.5 983V996M921.5 949V959M921.5 987V995M925.5 813V850M925.5 960V966M929.5 813V845M929.5 854V901M933.5 848V854M933.5 925V941M937.5 910V925M937.5 1002V1004M941.5 987V1000M941.5 1073V1082M945.5 1033V1050M945.5 1074V1084M949.5 976V1020M949.5 1028V1035M953.5 913V933M953.5 1017V1024M957.5 887V933M957.5 962V991M961.5 933V942M961.5 977V1001M965.5 962V967M965.5 975V1010M969.5 917V960M969.5 967V998M973.5 858V940M973.5 965V985M977.5 779V870M977.5 940V946M981.5 800V850M981.5 872V901M985.5 790V830M985.5 850V881M989.5 796V815M989.5 855V876M993.5 830V851M993.5 865V870M997.5 795V828M997.5 851V855M1001.5 772V779M1001.5 827V831M1005.5 731V739M1005.5 779V783M1009.5 655V656M1009.5 739V743M1013.5 643V652M1013.5 656V676M1017.5 512V525M1017.5 652V654M1021.5 424V449M1021.5 525V535M1025.5 316V335M1025.5 449V489M1029.5 283V338M1029.5 339V357M1033.5 305V331M1033.5 439V458M1037.5 426V439M1037.5 460V529M1041.5 445V458M1041.5 489V508M1045.5 482V503M1045.5 577V585M1049.5 489V564M1049.5 577V615M1053.5 504V513M1053.5 603V609M1057.5 465V510M1057.5 565V598M1061.5 536V566M1061.5 611V624M1065.5 591V610M1065.5 647V670M1069.5 618V646M1069.5 679V686M1073.5 599V605M1073.5 688V695M1077.5 547V599M1077.5 605V643M1081.5 575V601M1081.5 602V634M1085.5 585V601M1085.5 615V628M1089.5 604V613M1089.5 616V652M1093.5 526V560M1093.5 637V638M1097.5 520V535M1097.5 562V588M1101.5 516V535M1101.5 562V615M1105.5 519V562M1105.5 571V576M1109.5 557V567M1109.5 570V587M1113.5 477V525M1113.5 576V577M1117.5 497V532M1117.5 539V542M1121.5 484V515M1121.5 538V548M1125.5 477V515M1125.5 557V564M1129.5 550V560M1129.5 572V615M1133.5 477V498M1133.5 574V575M1137.5 449V456M1137.5 498V519M1141.5 434V456M1141.5 473V491M1145.5 434V467M1145.5 474V491M1149.5 428V453M1149.5 467V482M1153.5 396V411M1153.5 471V473M1157.5 380V385M1157.5 412V439M1161.5 291V315M1161.5 386V393M1165.5 295V315M1165.5 322V339M1169.5 317V321M1169.5 341V409M1173.5 322V328M1173.5 363V379M1177.5 315V328M1177.5 386V395M1181.5 331V338M1181.5 386V395M1185.5 298V309M1185.5 341V369M1189.5 217V258M1189.5 312V329M1193.5 230V266M1193.5 272V317M1197.5 234V254M1197.5 265V294M1201.5 193V212M1201.5 254V264M1205.5 187V207M1205.5 212V263M1209.5 202V205M1209.5 248V278M1213.5 244V254M1213.5 286V289M1217.5 194V233M1217.5 285V291M1221.5 136V156M1221.5 232V247M1225.5 93V129M1225.5 157V166M1229.5 116V129M1229.5 138V177M1233.5 117V152M1233.5 168V182M1237.5 147V170M1237.5 174V208M1241.5 150V174M1241.5 186V206M1245.5 171V186M1245.5 196V229M1249.5 190V197M1249.5 248V280M1253.5 207V241M1253.5 258V260M1257.5 151V163M1257.5 242V244M1261.5 144V163M1261.5 204V215M1265.5 147V157M1265.5 204V225M1269.5 91V157M1269.5 200V220M1273.5 86V121M1273.5 197V205M1277.5 68V121M1277.5 137V145M1281.5 129V137M1281.5 164V192M1285.5 152V167M1285.5 170V213M1289.5 155V168M1289.5 173V212M1293.5 159V166M1293.5 192V194M1297.5 182V188M1297.5 248V260M1301.5 199V208M1301.5 247V283M1305.5 182V204M1305.5 208V213M1309.5 186V190M1309.5 204V208M1313.5 188V193M1313.5 200V213M1317.5 190V199M1317.5 242V256M1321.5 233V242M1321.5 314V328M1325.5 303V306M1325.5 314V371M1329.5 289V307M1329.5 328V361M1333.5 319V328M1333.5 380V434M1337.5 372V380M1337.5 407V423M1341.5 379V404M1341.5 407V430M1345.5 382V393M1345.5 404V429M1349.5 382V393M1349.5 414V426M1353.5 379V393M1353.5 420V441M1357.5 305V308M1357.5 390V396M1361.5 294V314M1361.5 347V353M1365.5 298V317M1365.5 345V351M1369.5 314V316M1369.5 362V395M1373.5 257V267M1373.5 369V372M1377.5 256V267M1377.5 319V327M1381.5 244V265M1381.5 319V327M1385.5 244V261M1385.5 264V286M1389.5 227V238M1389.5 263V274M1393.5 234V238M1393.5 282V292M1397.5 277V282M1397.5 323V332M1401.5 318V324M1401.5 354V358M1405.5 332V355M1405.5 359V395M1409.5 337V355M1409.5 361V387M1413.5 287V308M1413.5 358V366M1417.5 234V256M1417.5 308V317M1421.5 247V256M1421.5 312V323M1425.5 308V312M1425.5 320V344M1429.5 296V300M1429.5 321V362M1433.5 298V308M1433.5 329V334M1437.5 315V329M1437.5 385V392M1441.5 379V384M1441.5 433V461M1445.5 403V433M1445.5 467V484M1449.5 437V467M1449.5 482V491M1453.5 462V481M1453.5 497V501M1457.5 414V446M1457.5 481V492M1461.5 389V432M1461.5 446V480M1465.5 379V432M1465.5 440V459M1469.5 395V415M1469.5 440V459M1473.5 223V277M1473.5 413V423M1477.5 265V277M1477.5 283V316M1481.5 260V285M1481.5 302V322M1485.5 274V302M1485.5 306V341M1489.5 290V306M1489.5 331V343" stroke="#5f9ea0" fill="none"/><path d="M9.5 404V438M13.5 438V459M17.5 461V499M25.5 495V525M29.5 525V527M33.5 527V543M45.5 452V490M61.5 422V446M65.5 446V497M69.5 497V508M97.5 467V508M101.5 512V516M105.5 519V529M109.5 530V542M113.5 543V557M117.5 558V566M125.5 564V582M129.5 582V595M137.5 550V562M145.5 537V545M149.5 546V599M153.5 599V716M157.5 718V766M169.5 699V715M173.5 716V748M177.5 749V767M181.5 784V790M189.5 696V798M193.5 800V806M205.5 787V802M213.5 783V802M217.5 803V845M225.5 811V855M237.5 816V894M245.5 914V938M257.5 796V808M269.5 735V739M281.5 662V721M289.5 660V667M293.5 668V694M297.5 695V753M301.5 744V778M305.5 779V799M309.5 799V803M313.5 803V817M321.5 788V812M325.5 813V815M329.5 815V839M333.5 840V859M345.5 826V851M385.5 548V580M393.5 558V586M413.5 523V595M421.5 566V573M425.5 566V586M429.5 566V586M437.5 576V603M441.5 607V611M445.5 612V638M449.5 636V665M453.5 654V672M465.5 611V630M473.5 617V626M477.5 628V659M497.5 589V593M505.5 578V596M517.5 575V628M537.5 503V510M545.5 458V470M549.5 470V496M553.5 498V504M557.5 506V536M565.5 534V538M577.5 444V474M581.5 479V482M585.5 484V529M589.5 534V614M597.5 531V560M617.5 442V444M629.5 423V460M637.5 457V494M645.5 488V553M649.5 554V596M653.5 626V636M661.5 615V622M681.5 560V572M685.5 572V577M689.5 573V617M693.5 631V652M701.5 649V658M705.5 659V713M709.5 713V725M717.5 712V749M733.5 552V622M737.5 623V642M749.5 597V658M757.5 601V650M761.5 651V690M765.5 691V720M769.5 721V750M773.5 751V900M781.5 701V760M785.5 776V900M793.5 651V720M797.5 721V790M801.5 791V860M809.5 716V760M825.5 561V600M829.5 601V650M833.5 651V720M837.5 721V780M841.5 781V880M865.5 763V782M873.5 744V832M881.5 819V871M885.5 863V877M889.5 871V890M901.5 876V898M905.5 907V958M913.5 934V965M917.5 947V983M929.5 846V854M933.5 855V925M937.5 926V1002M941.5 1001V1073M957.5 934V962M961.5 943V977M969.5 961V967M989.5 816V855M1033.5 332V439M1037.5 440V460M1041.5 459V489M1045.5 504V577M1057.5 511V565M1061.5 567V611M1065.5 611V647M1069.5 647V679M1085.5 602V615M1101.5 536V562M1105.5 563V571M1117.5 533V539M1125.5 516V557M1129.5 561V572M1141.5 457V473M1165.5 316V322M1169.5 322V341M1177.5 329V386M1209.5 206V248M1213.5 255V286M1229.5 130V138M1233.5 153V168M1237.5 171V174M1241.5 175V186M1245.5 187V196M1249.5 198V248M1261.5 164V204M1269.5 158V200M1277.5 122V137M1281.5 138V164M1289.5 169V173M1293.5 167V192M1297.5 189V248M1313.5 194V200M1317.5 200V242M1321.5 243V314M1329.5 308V328M1333.5 329V380M1337.5 381V407M1349.5 394V414M1361.5 315V347M1369.5 317V362M1377.5 268V319M1393.5 239V282M1397.5 283V323M1401.5 325V354M1405.5 356V359M1421.5 257V312M1425.5 313V320M1433.5 309V329M1437.5 330V385M1441.5 385V433M1445.5 434V467M1449.5 468V482M1465.5 433V440M1477.5 278V283M1481.5 286V302M1485.5 303V306M1489.5 307V331" stroke="#000" fill="none"/><path d="M5.5 403V422M21.5 495V507M37.5 473V543M41.5 452V475M49.5 432V489M53.5 432V434M57.5 421V432M73.5 504V508M77.5 495V503M81.5 482V506M85.5 476V481M89.5 474V475M93.5 467V474M121.5 564V568M133.5 550V595M141.5 537V570M161.5 742V774M165.5 699V740M185.5 696V789M197.5 800V809M201.5 787V815M209.5 783V804M221.5 812V870M229.5 832V855M233.5 814V832M241.5 915V918M249.5 845V937M253.5 796V845M261.5 758V817M265.5 735V759M273.5 668V739M277.5 662V667M285.5 658V723M317.5 789V816M337.5 848V860M341.5 823V867M349.5 803V851M353.5 731V805M357.5 664V731M361.5 674V676M365.5 630V673M369.5 602V629M373.5 568V601M377.5 551V567M381.5 548V558M389.5 557V580M397.5 587V601M401.5 561V596M405.5 556V559M409.5 523V560M417.5 573V598M433.5 573V588M457.5 620V676M461.5 611V619M481.5 639V662M485.5 625V638M489.5 598V624M493.5 594V598M501.5 578V593M509.5 589V606M513.5 575V588M521.5 627V628M525.5 588V627M529.5 571V587M533.5 504V571M541.5 470V503M561.5 533V538M569.5 503V516M573.5 444V502M593.5 529V603M601.5 542V559M605.5 505V542M609.5 493V504M613.5 443V513M621.5 433V442M625.5 423V432M633.5 457V463M641.5 488V496M657.5 612V636M665.5 621V633M669.5 619V621M673.5 621V631M677.5 559V621M697.5 649V654M713.5 712V714M721.5 612V748M725.5 590V610M729.5 552V589M741.5 638V642M745.5 600V620M753.5 601V658M777.5 701V890M789.5 641V890M805.5 721V850M813.5 661V760M817.5 611V660M821.5 561V610M845.5 871V890M849.5 867V880M853.5 807V866M857.5 760V806M861.5 746V765M869.5 744V765M877.5 819V832M893.5 888V901M897.5 874V892M909.5 928V958M921.5 960V987M925.5 851V960M945.5 1051V1074M949.5 1021V1028M953.5 934V1017M965.5 968V975M973.5 941V965M977.5 871V940M981.5 851V872M985.5 831V850M993.5 852V865M997.5 829V851M1001.5 780V827M1005.5 740V779M1009.5 657V739M1013.5 653V656M1017.5 526V652M1021.5 450V525M1025.5 336V449M1049.5 565V577M1053.5 514V603M1073.5 606V688M1077.5 600V605M1089.5 614V616M1093.5 561V637M1097.5 536V562M1109.5 568V570M1113.5 526V576M1121.5 516V538M1133.5 499V574M1137.5 457V498M1145.5 468V474M1149.5 454V467M1153.5 412V471M1157.5 386V412M1161.5 316V386M1173.5 329V363M1181.5 339V386M1185.5 310V341M1189.5 259V312M1193.5 267V272M1197.5 255V265M1201.5 213V254M1205.5 208V212M1217.5 234V285M1221.5 157V232M1225.5 130V157M1253.5 242V258M1257.5 164V242M1265.5 158V204M1273.5 122V197M1285.5 168V170M1301.5 209V247M1305.5 205V208M1309.5 191V204M1325.5 307V314M1341.5 405V407M1345.5 394V404M1353.5 394V420M1357.5 309V390M1365.5 318V345M1373.5 268V369M1381.5 266V319M1385.5 262V264M1389.5 239V263M1409.5 356V361M1413.5 309V358M1417.5 257V308M1429.5 301V321M1453.5 482V497M1457.5 447V481M1461.5 433V446M1469.5 416V440M1473.5 278V413" stroke="#fff" fill="none"/><path d="M409.5 522.7L413.5 562.8M409.5 530.8L413.5 570.8M409.5 538.8L413.5 578.8M409.5 546.8L413.5 586.8M405.5 554.8L413.5 594.8M401.5 562.8L413.5 602.8M401.5 570.8L413.5 610.8M425.5 530.8L425.5 570.8M425.5 538.8L425.5 578.8M421.5 546.8L425.5 586.8M421.5 554.8L425.5 594.8M417.5 562.8L433.5 602.8M417.5 570.8L433.5 610.8M433.5 546.8L437.5 586.8M433.5 554.8L437.5 594.8M433.5 562.8L437.5 602.8M433.5 570.8L437.5 610.8M397.5 578.8L437.5 618.8M397.5 586.8L445.5 626.9M397.5 594.8L445.5 634.9M413.5 602.8L445.5 642.9M413.5 610.8L449.5 650.9M437.5 618.8L449.5 658.9M445.5 626.9L449.5 666.9M445.5 634.9L453.5 674.9M445.5 642.9L453.5 682.9M449.5 650.9L453.5 690.9M461.5 586.8L465.5 626.9M461.5 594.8L465.5 634.9M473.5 594.8L473.5 634.9M461.5 602.8L473.5 642.9M477.5 602.8L477.5 642.9M457.5 610.8L477.5 650.9M457.5 618.8L477.5 658.9M501.5 554.8L505.5 594.8M501.5 570.8L509.5 610.8M497.5 578.8L509.5 618.8M501.5 562.8L517.5 602.8M509.5 570.8L517.5 610.8M509.5 578.8L517.5 618.8M493.5 586.8L517.5 626.9M489.5 594.8L521.5 634.9M537.5 426.7L537.5 466.7M537.5 434.7L537.5 474.7M537.5 442.7L537.5 482.7M537.5 450.7L537.5 490.7M537.5 458.7L537.5 498.7M537.5 442.7L537.5 482.7M537.5 450.7L537.5 490.7M537.5 458.7L537.5 498.7M537.5 466.7L537.5 506.7M537.5 474.7L537.5 514.7M537.5 482.7L537.5 522.7M545.5 442.7L545.5 482.7M545.5 450.7L549.5 490.7M541.5 458.7L549.5 498.7M541.5 466.7L553.5 506.7M541.5 474.7L557.5 514.7M541.5 482.7L557.5 522.7M537.5 490.7L557.5 530.8M533.5 498.7L557.5 538.8M533.5 506.7L561.5 546.8M573.5 434.7L577.5 474.7M573.5 442.7L581.5 482.7M573.5 450.7L585.5 490.7M573.5 458.7L585.5 498.7M573.5 466.7L585.5 506.7M573.5 474.7L585.5 514.7M573.5 482.7L585.5 522.7M573.5 490.7L585.5 530.8M569.5 498.7L585.5 538.8M569.5 506.7L585.5 546.8M533.5 514.7L585.5 554.8M533.5 522.7L589.5 562.8M533.5 530.8L589.5 570.8M533.5 538.8L589.5 578.8M533.5 546.8L589.5 586.8M533.5 554.8L589.5 594.8M529.5 562.8L589.5 602.8M529.5 570.8L589.5 610.8M529.5 578.8L589.5 618.8M597.5 522.7L597.5 562.8M593.5 530.8L597.5 570.8M593.5 538.8L597.5 578.8M593.5 546.8L597.5 586.8M593.5 554.8L601.5 594.8M593.5 562.8L601.5 602.8M593.5 570.8L601.5 610.8M593.5 578.8L601.5 618.8M617.5 418.6L617.5 458.7M625.5 410.6L629.5 450.7M621.5 418.6L629.5 458.7M617.5 426.7L633.5 466.7M617.5 434.7L637.5 474.7M613.5 442.7L637.5 482.7M613.5 450.7L637.5 490.7M613.5 458.7L641.5 498.7M613.5 466.7L645.5 506.7M613.5 474.7L645.5 514.7M613.5 482.7L645.5 522.7M609.5 490.7L645.5 530.8M609.5 498.7L645.5 538.8M605.5 506.7L645.5 546.8M605.5 514.7L645.5 554.8M605.5 522.7L645.5 562.8M605.5 530.8L645.5 570.8M601.5 538.8L645.5 578.8M649.5 538.8L649.5 578.8M601.5 546.8L649.5 586.8M601.5 554.8L649.5 594.8M601.5 570.8L653.5 610.8M601.5 578.8L653.5 618.8M525.5 586.8L653.5 626.9M525.5 594.8L653.5 634.9M601.5 562.8L661.5 602.8M489.5 602.8L665.5 642.9M489.5 610.8L665.5 650.9M681.5 546.8L685.5 586.8M681.5 554.8L689.5 594.8M677.5 562.8L689.5 602.8M677.5 570.8L689.5 610.8M677.5 578.8L689.5 618.8M677.5 586.8L689.5 626.9M677.5 594.8L693.5 634.9M665.5 602.8L693.5 642.9M665.5 610.8L693.5 650.9M485.5 618.8L693.5 658.9M457.5 626.9L697.5 666.9M701.5 610.8L701.5 650.9M701.5 618.8L701.5 658.9M701.5 626.9L705.5 666.9M457.5 634.9L705.5 674.9M457.5 642.9L705.5 682.9M457.5 650.9L705.5 690.9M449.5 658.9L705.5 698.9M449.5 666.9L705.5 706.9M453.5 674.9L705.5 714.9M453.5 682.9L705.5 722.9M453.5 690.9L709.5 731.0M705.5 698.9L709.5 739.0M705.5 706.9L717.5 747.0M705.5 714.9L717.5 755.0M721.5 626.9L721.5 666.9M721.5 634.9L721.5 674.9M721.5 642.9L721.5 682.9M721.5 650.9L721.5 690.9M721.5 658.9L721.5 698.9M721.5 666.9L721.5 706.9M721.5 674.9L721.5 714.9M721.5 682.9L721.5 722.9M725.5 530.8L725.5 570.8M725.5 538.8L725.5 578.8M725.5 546.8L725.5 586.8M725.5 554.8L729.5 594.8M725.5 562.8L729.5 602.8M729.5 530.8L733.5 570.8M729.5 538.8L733.5 578.8M729.5 546.8L733.5 586.8M729.5 554.8L733.5 594.8M729.5 562.8L733.5 602.8M725.5 570.8L733.5 610.8M725.5 578.8L733.5 618.8M725.5 586.8L733.5 626.9M725.5 594.8L737.5 634.9M721.5 602.8L737.5 642.9M721.5 610.8L737.5 650.9M721.5 618.8L737.5 658.9M721.5 626.9L737.5 666.9M721.5 634.9L737.5 674.9M741.5 594.8L741.5 634.9M741.5 602.8L745.5 642.9M745.5 554.8L745.5 594.8M745.5 562.8L749.5 602.8M745.5 570.8L749.5 610.8M745.5 578.8L749.5 618.8M745.5 586.8L749.5 626.9M745.5 594.8L749.5 634.9M745.5 602.8L749.5 642.9M741.5 610.8L749.5 650.9M741.5 618.8L749.5 658.9M741.5 626.9L749.5 666.9M741.5 634.9L749.5 674.9M721.5 642.9L749.5 682.9M721.5 650.9L749.5 690.9M721.5 658.9L749.5 698.9M721.5 666.9L749.5 706.9M721.5 674.9L749.5 714.9M721.5 682.9L749.5 722.9M749.5 610.8L749.5 650.9M749.5 618.8L749.5 658.9M749.5 626.9L749.5 666.9M749.5 634.9L749.5 674.9M749.5 642.9L749.5 682.9M749.5 650.9L749.5 690.9M749.5 658.9L749.5 698.9M749.5 666.9L749.5 706.9M749.5 674.9L749.5 714.9M749.5 682.9L749.5 722.9M721.5 690.9L749.5 731.0M721.5 698.9L749.5 739.0M721.5 706.9L749.5 747.0M721.5 714.9L749.5 755.0M705.5 722.9L749.5 763.0M749.5 658.9L753.5 698.9M749.5 666.9L753.5 706.9M749.5 674.9L753.5 714.9M749.5 682.9L753.5 722.9M749.5 690.9L753.5 731.0M749.5 698.9L753.5 739.0M749.5 706.9L753.5 747.0M753.5 610.8L753.5 650.9M753.5 618.8L753.5 658.9M753.5 626.9L753.5 666.9M753.5 634.9L753.5 674.9M753.5 642.9L753.5 682.9M753.5 650.9L753.5 690.9M753.5 658.9L753.5 698.9M753.5 666.9L753.5 706.9M753.5 674.9L753.5 714.9M757.5 562.8L757.5 602.8M757.5 570.8L757.5 610.8M753.5 578.8L757.5 618.8M753.5 586.8L757.5 626.9M753.5 594.8L757.5 634.9M753.5 602.8L757.5 642.9M753.5 610.8L757.5 650.9M753.5 618.8L757.5 658.9M753.5 626.9L757.5 666.9M757.5 586.8L757.5 626.9M757.5 594.8L757.5 634.9M757.5 602.8L757.5 642.9M757.5 610.8L757.5 650.9M757.5 618.8L757.5 658.9M757.5 626.9L757.5 666.9M753.5 634.9L757.5 674.9M753.5 642.9L757.5 682.9M753.5 650.9L757.5 690.9M753.5 658.9L757.5 698.9M761.5 626.9L761.5 666.9M761.5 634.9L761.5 674.9M761.5 642.9L761.5 682.9M757.5 650.9L761.5 690.9M757.5 658.9L761.5 698.9M753.5 666.9L761.5 706.9M753.5 674.9L761.5 714.9M765.5 642.9L765.5 682.9M765.5 650.9L765.5 690.9M765.5 658.9L765.5 698.9M765.5 666.9L765.5 706.9M765.5 674.9L765.5 714.9M753.5 682.9L765.5 722.9M753.5 690.9L765.5 731.0M765.5 658.9L765.5 698.9M765.5 666.9L765.5 706.9M765.5 674.9L765.5 714.9M765.5 682.9L765.5 722.9M765.5 690.9L765.5 731.0M753.5 698.9L765.5 739.0M753.5 706.9L765.5 747.0M749.5 714.9L765.5 755.0M769.5 682.9L769.5 722.9M769.5 690.9L769.5 731.0M769.5 698.9L769.5 739.0M769.5 706.9L769.5 747.0M769.5 714.9L769.5 755.0M749.5 722.9L769.5 763.0M769.5 698.9L769.5 739.0M769.5 706.9L769.5 747.0M769.5 714.9L769.5 755.0M769.5 722.9L769.5 763.0M709.5 731.0L769.5 771.0M709.5 739.0L769.5 779.0M717.5 747.0L769.5 787.0M773.5 706.9L773.5 747.0M773.5 714.9L773.5 755.0M773.5 722.9L773.5 763.0M773.5 731.0L773.5 771.0M773.5 739.0L773.5 779.0M773.5 747.0L773.5 787.0M717.5 755.0L773.5 795.0M749.5 763.0L773.5 803.0M769.5 771.0L773.5 811.0M769.5 779.0L773.5 819.0M769.5 787.0L773.5 827.1M773.5 795.0L773.5 835.1M773.5 803.0L773.5 843.1M773.5 811.0L773.5 851.1M773.5 819.0L773.5 859.1M773.5 827.1L773.5 867.1M773.5 835.1L773.5 875.1M773.5 843.1L773.5 883.1M773.5 851.1L773.5 891.1M773.5 747.0L773.5 787.0M773.5 755.0L773.5 795.0M773.5 763.0L773.5 803.0M773.5 771.0L773.5 811.0M773.5 779.0L773.5 819.0M773.5 787.0L773.5 827.1M773.5 795.0L773.5 835.1M773.5 803.0L773.5 843.1M773.5 811.0L773.5 851.1M773.5 819.0L773.5 859.1M773.5 827.1L773.5 867.1M773.5 835.1L773.5 875.1M773.5 843.1L773.5 883.1M773.5 851.1L773.5 891.1M773.5 859.1L773.5 899.1M773.5 867.1L773.5 907.1M773.5 875.1L773.5 915.1M773.5 883.1L773.5 923.1M773.5 891.1L773.5 931.2M773.5 899.1L773.5 939.2M777.5 722.9L777.5 763.0M777.5 731.0L777.5 771.0M777.5 739.0L777.5 779.0M777.5 747.0L777.5 787.0M777.5 755.0L777.5 795.0M777.5 763.0L777.5 803.0M777.5 771.0L777.5 811.0M777.5 779.0L777.5 819.0M777.5 787.0L777.5 827.1M777.5 795.0L777.5 835.1M777.5 803.0L777.5 843.1M777.5 811.0L777.5 851.1M777.5 819.0L777.5 859.1M777.5 682.9L781.5 722.9M777.5 690.9L781.5 731.0M777.5 698.9L781.5 739.0M777.5 706.9L781.5 747.0M777.5 714.9L781.5 755.0M777.5 722.9L781.5 763.0M777.5 731.0L781.5 771.0M777.5 739.0L781.5 779.0M781.5 714.9L781.5 755.0M781.5 722.9L781.5 763.0M781.5 731.0L781.5 771.0M781.5 739.0L781.5 779.0M777.5 747.0L781.5 787.0M777.5 755.0L781.5 795.0M777.5 763.0L785.5 803.0M777.5 771.0L785.5 811.0M777.5 779.0L785.5 819.0M777.5 787.0L785.5 827.1M777.5 795.0L785.5 835.1M777.5 803.0L785.5 843.1M777.5 811.0L785.5 851.1M777.5 819.0L785.5 859.1M777.5 827.1L785.5 867.1M777.5 835.1L785.5 875.1M777.5 843.1L785.5 883.1M777.5 851.1L785.5 891.1M777.5 859.1L785.5 899.1M785.5 795.0L785.5 835.1M785.5 803.0L785.5 843.1M785.5 811.0L785.5 851.1M785.5 819.0L785.5 859.1M785.5 827.1L785.5 867.1M785.5 835.1L785.5 875.1M785.5 843.1L785.5 883.1M785.5 851.1L785.5 891.1M785.5 859.1L785.5 899.1M777.5 867.1L785.5 907.1M777.5 875.1L785.5 915.1M777.5 883.1L785.5 923.1M777.5 891.1L785.5 931.2M789.5 666.9L789.5 706.9M789.5 674.9L789.5 714.9M789.5 682.9L789.5 722.9M789.5 690.9L789.5 731.0M789.5 698.9L789.5 739.0M789.5 706.9L789.5 747.0M789.5 714.9L789.5 755.0M789.5 722.9L789.5 763.0M789.5 731.0L789.5 771.0M789.5 739.0L789.5 779.0M789.5 747.0L789.5 787.0M789.5 755.0L789.5 795.0M789.5 763.0L789.5 803.0M789.5 771.0L789.5 811.0M789.5 779.0L789.5 819.0M789.5 787.0L789.5 827.1M789.5 795.0L789.5 835.1M789.5 803.0L789.5 843.1M789.5 811.0L789.5 851.1M789.5 610.8L793.5 650.9M789.5 618.8L793.5 658.9M789.5 626.9L793.5 666.9M789.5 634.9L793.5 674.9M789.5 642.9L793.5 682.9M789.5 650.9L793.5 690.9M789.5 658.9L793.5 698.9M789.5 666.9L793.5 706.9M789.5 674.9L793.5 714.9M789.5 682.9L793.5 722.9M789.5 690.9L793.5 731.0M789.5 698.9L793.5 739.0M789.5 706.9L793.5 747.0M789.5 714.9L793.5 755.0M789.5 722.9L793.5 763.0M793.5 674.9L793.5 714.9M793.5 682.9L793.5 722.9M793.5 690.9L793.5 731.0M793.5 698.9L793.5 739.0M793.5 706.9L793.5 747.0M793.5 714.9L793.5 755.0M793.5 722.9L793.5 763.0M789.5 731.0L793.5 771.0M789.5 739.0L793.5 779.0M789.5 747.0L793.5 787.0M789.5 755.0L793.5 795.0M797.5 666.9L797.5 706.9M797.5 674.9L797.5 714.9M797.5 682.9L797.5 722.9M797.5 690.9L797.5 731.0M797.5 698.9L797.5 739.0M797.5 706.9L797.5 747.0M797.5 714.9L797.5 755.0M793.5 722.9L797.5 763.0M793.5 731.0L797.5 771.0M793.5 739.0L797.5 779.0M793.5 747.0L797.5 787.0M793.5 755.0L797.5 795.0M797.5 690.9L797.5 731.0M797.5 698.9L797.5 739.0M797.5 706.9L797.5 747.0M797.5 714.9L797.5 755.0M797.5 722.9L797.5 763.0M797.5 731.0L797.5 771.0M797.5 739.0L797.5 779.0M797.5 747.0L797.5 787.0M797.5 755.0L797.5 795.0M789.5 763.0L797.5 803.0M789.5 771.0L797.5 811.0M789.5 779.0L797.5 819.0M789.5 787.0L797.5 827.1M801.5 763.0L801.5 803.0M801.5 771.0L801.5 811.0M801.5 779.0L801.5 819.0M801.5 787.0L801.5 827.1M789.5 795.0L801.5 835.1M789.5 803.0L801.5 843.1M789.5 811.0L801.5 851.1M801.5 779.0L801.5 819.0M801.5 787.0L801.5 827.1M801.5 795.0L801.5 835.1M801.5 803.0L801.5 843.1M801.5 811.0L801.5 851.1M789.5 819.0L801.5 859.1M789.5 827.1L801.5 867.1M789.5 835.1L801.5 875.1M789.5 843.1L801.5 883.1M805.5 731.0L805.5 771.0M805.5 739.0L805.5 779.0M805.5 747.0L805.5 787.0M805.5 755.0L805.5 795.0M805.5 763.0L805.5 803.0M805.5 771.0L805.5 811.0M805.5 779.0L805.5 819.0M805.5 787.0L805.5 827.1M805.5 690.9L809.5 731.0M805.5 698.9L809.5 739.0M805.5 706.9L809.5 747.0M805.5 714.9L809.5 755.0M805.5 722.9L809.5 763.0M805.5 731.0L809.5 771.0M805.5 739.0L809.5 779.0M809.5 714.9L809.5 755.0M809.5 722.9L809.5 763.0M809.5 731.0L809.5 771.0M809.5 739.0L809.5 779.0M805.5 747.0L809.5 787.0M805.5 755.0L809.5 795.0M805.5 763.0L809.5 803.0M809.5 763.0L813.5 803.0M805.5 771.0L813.5 811.0M813.5 682.9L813.5 722.9M813.5 690.9L813.5 731.0M813.5 698.9L813.5 739.0M813.5 706.9L813.5 747.0M813.5 714.9L813.5 755.0M813.5 722.9L813.5 763.0M813.5 731.0L813.5 771.0M813.5 739.0L813.5 779.0M813.5 747.0L813.5 787.0M813.5 642.9L817.5 682.9M813.5 650.9L817.5 690.9M813.5 658.9L817.5 698.9M817.5 618.8L817.5 658.9M817.5 626.9L817.5 666.9M817.5 634.9L817.5 674.9M817.5 642.9L817.5 682.9M817.5 594.8L821.5 634.9M821.5 546.8L825.5 586.8M821.5 554.8L825.5 594.8M821.5 562.8L825.5 602.8M821.5 570.8L825.5 610.8M821.5 578.8L825.5 618.8M821.5 586.8L825.5 626.9M821.5 594.8L825.5 634.9M817.5 602.8L825.5 642.9M829.5 570.8L829.5 610.8M829.5 578.8L829.5 618.8M829.5 586.8L829.5 626.9M829.5 594.8L829.5 634.9M825.5 602.8L829.5 642.9M817.5 610.8L829.5 650.9M817.5 618.8L829.5 658.9M829.5 594.8L829.5 634.9M829.5 602.8L829.5 642.9M829.5 610.8L829.5 650.9M829.5 618.8L829.5 658.9M817.5 626.9L829.5 666.9M817.5 634.9L829.5 674.9M817.5 642.9L829.5 682.9M833.5 642.9L833.5 682.9M817.5 650.9L833.5 690.9M817.5 658.9L833.5 698.9M813.5 666.9L833.5 706.9M813.5 674.9L833.5 714.9M813.5 682.9L833.5 722.9M833.5 658.9L833.5 698.9M833.5 666.9L833.5 706.9M833.5 674.9L833.5 714.9M833.5 682.9L833.5 722.9M813.5 690.9L833.5 731.0M813.5 698.9L833.5 739.0M837.5 666.9L837.5 706.9M837.5 674.9L837.5 714.9M837.5 682.9L837.5 722.9M837.5 690.9L837.5 731.0M837.5 698.9L837.5 739.0M813.5 706.9L837.5 747.0M813.5 714.9L837.5 755.0M813.5 722.9L837.5 763.0M837.5 682.9L837.5 722.9M837.5 690.9L837.5 731.0M837.5 698.9L837.5 739.0M837.5 706.9L837.5 747.0M837.5 714.9L837.5 755.0M837.5 722.9L837.5 763.0M813.5 731.0L837.5 771.0M813.5 739.0L837.5 779.0M813.5 747.0L837.5 787.0M841.5 731.0L841.5 771.0M841.5 739.0L841.5 779.0M841.5 747.0L841.5 787.0M813.5 755.0L841.5 795.0M813.5 763.0L841.5 803.0M813.5 771.0L841.5 811.0M805.5 779.0L841.5 819.0M805.5 787.0L841.5 827.1M805.5 795.0L841.5 835.1M805.5 803.0L841.5 843.1M805.5 811.0L841.5 851.1M805.5 819.0L841.5 859.1M841.5 755.0L841.5 795.0M841.5 763.0L841.5 803.0M841.5 771.0L841.5 811.0M841.5 779.0L841.5 819.0M841.5 787.0L841.5 827.1M841.5 795.0L841.5 835.1M841.5 803.0L841.5 843.1M841.5 811.0L841.5 851.1M841.5 819.0L841.5 859.1M805.5 827.1L841.5 867.1M805.5 835.1L841.5 875.1M805.5 843.1L841.5 883.1M789.5 851.1L841.5 891.1M789.5 859.1L845.5 899.1M789.5 867.1L845.5 907.1M789.5 875.1L845.5 915.1M789.5 883.1L845.5 923.1M845.5 843.1L845.5 883.1M845.5 851.1L845.5 891.1M845.5 859.1L845.5 899.1M845.5 867.1L845.5 907.1M845.5 819.0L845.5 859.1M845.5 827.1L845.5 867.1M845.5 843.1L849.5 883.1M845.5 851.1L849.5 891.1M857.5 714.9L857.5 755.0M857.5 731.0L861.5 771.0M857.5 739.0L861.5 779.0M857.5 747.0L861.5 787.0M857.5 722.9L865.5 763.0M865.5 731.0L865.5 771.0M865.5 739.0L865.5 779.0M861.5 747.0L865.5 787.0M857.5 755.0L865.5 795.0M869.5 739.0L873.5 779.0M869.5 747.0L873.5 787.0M869.5 755.0L873.5 795.0M857.5 763.0L873.5 803.0M857.5 771.0L873.5 811.0M853.5 779.0L873.5 819.0M873.5 755.0L873.5 795.0M873.5 763.0L873.5 803.0M873.5 771.0L873.5 811.0M873.5 779.0L873.5 819.0M853.5 787.0L873.5 827.1M853.5 795.0L873.5 835.1M853.5 803.0L873.5 843.1M877.5 803.0L881.5 843.1M853.5 811.0L881.5 851.1M853.5 819.0L881.5 859.1M853.5 827.1L881.5 867.1M845.5 835.1L881.5 875.1M849.5 843.1L881.5 883.1M885.5 835.1L885.5 875.1M885.5 843.1L885.5 883.1M849.5 851.1L885.5 891.1M845.5 859.1L885.5 899.1M845.5 867.1L885.5 907.1M889.5 843.1L889.5 883.1M889.5 851.1L889.5 891.1M889.5 859.1L889.5 899.1M893.5 859.1L897.5 899.1M889.5 867.1L897.5 907.1M845.5 875.1L897.5 915.1M845.5 883.1L897.5 923.1M789.5 891.1L897.5 931.2M901.5 859.1L901.5 899.1M897.5 867.1L901.5 907.1M897.5 875.1L901.5 915.1M897.5 883.1L905.5 923.1M897.5 891.1L905.5 931.2M777.5 899.1L905.5 939.2M773.5 907.1L905.5 947.2M773.5 915.1L905.5 955.2M773.5 923.1L905.5 963.2M773.5 931.2L905.5 971.2M773.5 939.2L905.5 979.2M905.5 947.2L909.5 987.2M913.5 915.1L913.5 955.2M913.5 923.1L913.5 963.2M909.5 931.2L913.5 971.2M909.5 939.2L913.5 979.2M917.5 939.2L917.5 979.2M909.5 947.2L917.5 987.2M925.5 851.1L925.5 891.1M925.5 859.1L925.5 899.1M925.5 867.1L925.5 907.1M925.5 875.1L925.5 915.1M925.5 883.1L925.5 923.1M925.5 891.1L925.5 931.2M925.5 899.1L925.5 939.2M925.5 819.0L929.5 859.1M925.5 827.1L929.5 867.1M925.5 835.1L929.5 875.1M925.5 843.1L929.5 883.1M925.5 851.1L929.5 891.1M925.5 859.1L929.5 899.1M933.5 851.1L933.5 891.1M929.5 859.1L933.5 899.1M925.5 867.1L933.5 907.1M925.5 875.1L933.5 915.1M925.5 883.1L933.5 923.1M925.5 891.1L933.5 931.2M925.5 899.1L933.5 939.2M925.5 907.1L937.5 947.2M925.5 915.1L937.5 955.2M925.5 923.1L937.5 963.2M925.5 931.2L937.5 971.2M925.5 939.2L937.5 979.2M925.5 947.2L937.5 987.2M905.5 955.2L937.5 995.2M905.5 963.2L941.5 1003.2M905.5 971.2L941.5 1011.2M905.5 979.2L941.5 1019.2M909.5 987.2L941.5 1027.3M937.5 995.2L941.5 1035.3M941.5 1003.2L941.5 1043.3M941.5 1011.2L941.5 1051.3M941.5 1019.2L941.5 1059.3M941.5 1027.3L941.5 1067.3M941.5 1035.3L941.5 1075.3M949.5 979.2L949.5 1019.2M953.5 939.2L953.5 979.2M953.5 947.2L953.5 987.2M953.5 955.2L953.5 995.2M953.5 963.2L953.5 1003.2M957.5 891.1L957.5 931.2M957.5 899.1L957.5 939.2M957.5 907.1L957.5 947.2M953.5 915.1L957.5 955.2M953.5 923.1L957.5 963.2M957.5 907.1L957.5 947.2M957.5 915.1L957.5 955.2M957.5 923.1L957.5 963.2M953.5 931.2L957.5 971.2M953.5 939.2L957.5 979.2M953.5 947.2L957.5 987.2M961.5 939.2L961.5 979.2M961.5 947.2L961.5 987.2M953.5 955.2L961.5 995.2M953.5 963.2L965.5 1003.2M969.5 923.1L969.5 963.2M969.5 931.2L969.5 971.2M969.5 939.2L969.5 979.2M969.5 947.2L969.5 987.2M969.5 955.2L969.5 995.2M973.5 891.1L973.5 931.2M973.5 899.1L973.5 939.2M973.5 907.1L973.5 947.2M973.5 915.1L973.5 955.2M973.5 923.1L973.5 963.2M973.5 859.1L973.5 899.1M973.5 867.1L973.5 907.1M973.5 875.1L973.5 915.1M973.5 883.1L973.5 923.1M973.5 891.1L973.5 931.2M973.5 899.1L973.5 939.2M977.5 819.0L977.5 859.1M977.5 827.1L977.5 867.1M977.5 835.1L977.5 875.1M977.5 843.1L977.5 883.1M977.5 851.1L977.5 891.1M977.5 859.1L977.5 899.1M977.5 867.1L977.5 907.1M977.5 875.1L977.5 915.1M977.5 779.0L977.5 819.0M977.5 787.0L977.5 827.1M977.5 795.0L977.5 835.1M977.5 803.0L977.5 843.1M977.5 811.0L977.5 851.1M977.5 819.0L977.5 859.1M977.5 827.1L977.5 867.1M977.5 835.1L981.5 875.1M977.5 843.1L981.5 883.1M977.5 851.1L981.5 891.1M977.5 859.1L981.5 899.1M981.5 803.0L981.5 843.1M981.5 811.0L985.5 851.1M981.5 819.0L985.5 859.1M981.5 827.1L985.5 867.1M981.5 835.1L985.5 875.1M985.5 795.0L989.5 835.1M985.5 803.0L989.5 843.1M985.5 811.0L989.5 851.1M985.5 819.0L989.5 859.1M985.5 827.1L989.5 867.1M1017.5 546.8L1017.5 586.8M1017.5 554.8L1017.5 594.8M1017.5 562.8L1017.5 602.8M1017.5 570.8L1017.5 610.8M1017.5 578.8L1017.5 618.8M1017.5 586.8L1017.5 626.9" stroke="#4169e1" fill="none"/><path d="M941.5 1043.3L1017.5 515M941.5 1051.3L1017.5 515M941.5 1059.3L1017.5 515M941.5 1067.3L1017.5 515M941.5 1075.3L1017.5 515M945.5 1035.3L1017.5 515M949.5 987.2L1017.5 515M949.5 995.2L1017.5 515M949.5 1003.2L1017.5 515M949.5 1011.2L1017.5 515M949.5 1019.2L1017.5 515M949.5 1027.3L1017.5 515M953.5 971.2L1017.5 515M953.5 979.2L1017.5 515M965.5 963.2L1017.5 515M973.5 907.1L1017.5 515M973.5 915.1L1017.5 515M973.5 923.1L1017.5 515M973.5 931.2L1017.5 515M973.5 939.2L1017.5 515M973.5 947.2L1017.5 515M973.5 955.2L1017.5 515M977.5 867.1L1017.5 515M977.5 875.1L1017.5 515M977.5 883.1L1017.5 515M977.5 891.1L1017.5 515M977.5 899.1L1017.5 515M981.5 843.1L1017.5 515M981.5 851.1L1017.5 515M981.5 859.1L1017.5 515M985.5 835.1L1017.5 515M997.5 795.0L1017.5 515M997.5 803.0L1017.5 515M997.5 811.0L1017.5 515M997.5 819.0L1017.5 515M997.5 827.1L1017.5 515M1001.5 779.0L1017.5 515M1001.5 787.0L1017.5 515M1005.5 739.0L1017.5 515M1005.5 747.0L1017.5 515M1005.5 755.0L1017.5 515M1005.5 763.0L1017.5 515M1005.5 771.0L1017.5 515M1009.5 658.9L1017.5 515M1009.5 666.9L1017.5 515M1009.5 674.9L1017.5 515M1009.5 682.9L1017.5 515M1009.5 690.9L1017.5 515M1009.5 698.9L1017.5 515M1009.5 706.9L1017.5 515M1009.5 714.9L1017.5 515M1009.5 722.9L1017.5 515M1009.5 731.0L1017.5 515M1013.5 650.9L1017.5 515M1017.5 514.7L1017.5 515M1017.5 522.7L1017.5 515M1017.5 530.8L1017.5 515M1017.5 538.8L1017.5 515M1017.5 546.8L1017.5 515M1017.5 554.8L1017.5 515M1017.5 562.8L1017.5 515M1017.5 570.8L1017.5 515M1017.5 578.8L1017.5 515M1017.5 586.8L1017.5 515M1017.5 594.8L1017.5 515M1017.5 602.8L1017.5 515M1017.5 610.8L1017.5 515M1017.5 618.8L1017.5 515M1017.5 626.9L1017.5 515M1017.5 634.9L1017.5 515M1017.5 642.9L1017.5 515" stroke="#ff4500" stroke-width="2" fill="none"/><path d="M397.5 600L413.5 607M413.5 599L433.5 607M433.5 614L441.5 621L445.5 630L449.5 644M449.5 626V644M449.5 660L453.5 670M453.5 674V691M453.5 691L705.5 699V712L709.5 722L717.5 730V748L749.5 756M849.5 872L880.5 877M881.5 890L887.5 898M897.5 907L902.5 932M906.5 962L923.5 983L938.5 996M940.5 1008L944.5 1068M941.5 1040V1075M753.5 618V640M760.5 669V686M768.5 699V720M777.5 826V839M787.5 750V771M793.5 779V797M801.5 813V839M813.5 750V771M817.5 606V623M821.5 623L825.5 640M827.5 576V593M833.5 699V716M840.5 754V771M784.5 868V907M773.5 880V900M797.5 846V866M809.5 700V730M829.5 640L833.5 660M845.5 800V830M853.5 840V862M913.5 940V965M929.5 960V985M893.5 880V905" stroke="#ffff00" fill="none"/><path d="M6 514.500H1490M6 1075.500H1490" stroke="#ffff00"/><path d="M6 586.500H1490" stroke="#00e5ee"/><path d="M6 867.500H1490" stroke="#ff0000" stroke-dasharray="3 3"/><path d="M397.500 56V1089" stroke="#00e5ee"/><path d="M1017.500 56V1089" stroke="#ff00ff"/></svg></svg>
<div style="position:absolute;left:1492px;top:509px;width:40px;height:11px;background:#ffff00;z-index:3;"></div>
<div style="position:absolute;left:1492px;top:581px;width:40px;height:11px;background:#00e5ee;z-index:3;"></div>
<div style="position:absolute;left:1492px;top:862px;width:40px;height:11px;background:#ff0000;z-index:3;"></div>
<div style="position:absolute;left:1492px;top:1070px;width:40px;height:11px;background:#ffff00;z-index:3;"></div>
<div style="position:absolute;left:358px;top:1093px;width:78px;height:11px;background:#00e5ee;z-index:3;"></div>
<div style="position:absolute;left:978px;top:1093px;width:79px;height:11px;background:#ff00ff;z-index:3;"></div>
<svg style="left:9px;top:59px" width="30" height="12" viewBox="0 0 30 12"><rect x="0" y="0" width="14" height="12" fill="#fff"/><rect x="0" y="0" width="14" height="2" fill="#6a6af0"/>
<path d="M2 4.500H6.500M2 6.500H6.500M2 8.500H6.500M2 10.500H6.500" stroke="#e05a5a"/><path d="M8 4.500H12.500M8 6.500H12.500M8 8.500H12.500M8 10.500H12.500" stroke="#5a5af0"/>
<path d="M17 1H20V5H23V12H17Z" fill="#2222ee"/><path d="M25 4H27V1H30V12H25Z" fill="#cc2a2a"/><rect x="21" y="1" width="6" height="2" fill="#ddd"/><rect x="23" y="3" width="2" height="3" fill="#bbb"/></svg>
<div style="position:absolute;left:16px;top:1115px;width:1526px;height:254px;background:#fff;border:1px solid #a0a0a0;border-bottom:none;border-right-color:#e4e4e4;box-sizing:border-box;"></div>
<div style="position:absolute;left:2px;top:1129px;width:13px;height:261px;background:linear-gradient(#d6e3f1,#b9cce4);"></div>
<svg style="left:5px;top:1118px" width="7" height="6" viewBox="0 0 7 6"><path d="M0.500 0.500L6.500 5.500M6.500 0.500L0.500 5.500" stroke="#000" stroke-width="1.600"/></svg>
<div style="position:absolute;left:17px;top:1159px;width:1524px;height:1px;background:#d6d6d6;"></div>
<svg style="left:23px;top:1146px" width="8" height="8" viewBox="0 0 8 8"><circle cx="3.500" cy="4" r="2.500" fill="#f0f0f0" stroke="#8a8a8a" stroke-width="1.400"/></svg>
<div style="position:absolute;left:17px;top:1160px;width:1524px;height:19px;background:#ebebeb;"></div>
<div style="position:absolute;left:17px;top:1179px;width:1524px;height:1px;background:#d6d6d6;"></div>
<svg style="left:23px;top:1166px" width="8" height="8" viewBox="0 0 8 8"><circle cx="3.500" cy="4" r="2.500" fill="#f0f0f0" stroke="#8a8a8a" stroke-width="1.400"/></svg>
<div style="position:absolute;left:17px;top:1199px;width:1524px;height:1px;background:#d6d6d6;"></div>
<svg style="left:23px;top:1186px" width="8" height="8" viewBox="0 0 8 8"><circle cx="3.500" cy="4" r="2.500" fill="#f0f0f0" stroke="#8a8a8a" stroke-width="1.400"/></svg>
<div style="position:absolute;left:17px;top:1200px;width:1524px;height:19px;background:#ebebeb;"></div>
<div style="position:absolute;left:17px;top:1219px;width:1524px;height:1px;background:#d6d6d6;"></div>
<svg style="left:23px;top:1206px" width="8" height="8" viewBox="0 0 8 8"><circle cx="3.500" cy="4" r="2.500" fill="#f0f0f0" stroke="#8a8a8a" stroke-width="1.400"/></svg>
<div style="position:absolute;left:17px;top:1239px;width:1524px;height:1px;background:#d6d6d6;"></div>
<svg style="left:23px;top:1226px" width="8" height="8" viewBox="0 0 8 8"><circle cx="3.500" cy="4" r="2.500" fill="#f0f0f0" stroke="#8a8a8a" stroke-width="1.400"/></svg>
<div style="position:absolute;left:17px;top:1240px;width:1524px;height:19px;background:#ebebeb;"></div>
<div style="position:absolute;left:17px;top:1259px;width:1524px;height:1px;background:#d6d6d6;"></div>
<svg style="left:23px;top:1246px" width="8" height="8" viewBox="0 0 8 8"><circle cx="3.500" cy="4" r="2.500" fill="#f0f0f0" stroke="#8a8a8a" stroke-width="1.400"/></svg>
<div style="position:absolute;left:17px;top:1279px;width:1524px;height:1px;background:#d6d6d6;"></div>
<svg style="left:23px;top:1266px" width="8" height="8" viewBox="0 0 8 8"><circle cx="3.500" cy="4" r="2.500" fill="#f0f0f0" stroke="#8a8a8a" stroke-width="1.400"/></svg>
<div style="position:absolute;left:17px;top:1280px;width:1524px;height:19px;background:#ebebeb;"></div>
<div style="position:absolute;left:17px;top:1299px;width:1524px;height:1px;background:#d6d6d6;"></div>
<svg style="left:23px;top:1286px" width="8" height="8" viewBox="0 0 8 8"><circle cx="3.500" cy="4" r="2.500" fill="#f0f0f0" stroke="#8a8a8a" stroke-width="1.400"/></svg>
<div style="position:absolute;left:17px;top:1319px;width:1524px;height:1px;background:#d6d6d6;"></div>
<svg style="left:23px;top:1306px" width="8" height="8" viewBox="0 0 8 8"><circle cx="3.500" cy="4" r="2.500" fill="#f0f0f0" stroke="#8a8a8a" stroke-width="1.400"/></svg>
<div style="position:absolute;left:17px;top:1320px;width:1524px;height:19px;background:#ebebeb;"></div>
<div style="position:absolute;left:17px;top:1339px;width:1524px;height:1px;background:#d6d6d6;"></div>
<svg style="left:23px;top:1326px" width="8" height="8" viewBox="0 0 8 8"><circle cx="3.500" cy="4" r="2.500" fill="#f0f0f0" stroke="#8a8a8a" stroke-width="1.400"/></svg>
<div style="position:absolute;left:17px;top:1359px;width:1524px;height:1px;background:#d6d6d6;"></div>
<svg style="left:23px;top:1346px" width="8" height="8" viewBox="0 0 8 8"><circle cx="3.500" cy="4" r="2.500" fill="#f0f0f0" stroke="#8a8a8a" stroke-width="1.400"/></svg>
<div style="position:absolute;left:176px;top:1116px;width:1px;height:244px;background:#d6d6d6;"></div>
<div style="position:absolute;left:356px;top:1116px;width:1px;height:244px;background:#d6d6d6;"></div>
<div style="position:absolute;left:1540px;top:1116px;width:1px;height:24px;background:#d6d6d6;"></div>
<div style="position:absolute;left:16px;top:1368px;width:1526px;height:1px;background:#000;"></div>
<div style="position:absolute;left:63px;top:1372px;width:1px;height:14px;background:#606060;"></div>
<div style="position:absolute;left:131px;top:1372px;width:1px;height:14px;background:#606060;"></div>
<div style="position:absolute;left:199px;top:1372px;width:1px;height:14px;background:#606060;"></div>
<div style="position:absolute;left:253px;top:1372px;width:1px;height:14px;background:#606060;"></div>
<div style="position:absolute;left:330px;top:1372px;width:1px;height:14px;background:#606060;"></div>
<div style="position:absolute;left:418px;top:1372px;width:1px;height:14px;background:#606060;"></div>
<div style="position:absolute;left:462px;top:1372px;width:1px;height:14px;background:#606060;"></div>
<div style="position:absolute;left:524px;top:1372px;width:1px;height:14px;background:#606060;"></div>
<div style="position:absolute;left:577px;top:1372px;width:1px;height:14px;background:#606060;"></div>
<div style="position:absolute;left:635px;top:1372px;width:1px;height:14px;background:#606060;"></div>
<div style="position:absolute;left:685px;top:1372px;width:1px;height:14px;background:#606060;"></div>
<div style="position:absolute;left:747px;top:1372px;width:1px;height:14px;background:#606060;"></div>
<div style="position:absolute;left:787px;top:1368px;width:73px;height:20px;background:#fff;border:1px solid #000;border-top:none;box-sizing:border-box;"></div>
<span class="t" style="left:33px;top:3px;font:12px/14px 'Liberation Sans','IPAGothic',sans-serif;color:#000;transform:scaleX(0.7501);">ファイル (<u>F</u>)</span>
<span class="t" style="left:107px;top:3px;font:12px/14px 'Liberation Sans','IPAGothic',sans-serif;color:#000;transform:scaleX(0.9229);">表示 (<u>V</u>)</span>
<span class="t" style="left:171px;top:3px;font:12px/14px 'Liberation Sans','IPAGothic',sans-serif;color:#000;transform:scaleX(0.9341);">挿入(<u>I</u>)</span>
<span class="t" style="left:228px;top:3px;font:12px/14px 'Liberation Sans','IPAGothic',sans-serif;color:#000;transform:scaleX(0.7206);">チャート (<u>C</u>)</span>
<span class="t" style="left:300px;top:3px;font:12px/14px 'Liberation Sans','IPAGothic',sans-serif;color:#000;transform:scaleX(0.7793);">ツール(<u>T</u>)</span>
<span class="t" style="left:364px;top:3px;font:12px/14px 'Liberation Sans','IPAGothic',sans-serif;color:#000;transform:scaleX(0.7690);">ウインドウ(<u>W</u>)</span>
<span class="t" style="left:449px;top:3px;font:12px/14px 'Liberation Sans','IPAGothic',sans-serif;color:#000;transform:scaleX(0.8354);">ヘルプ(<u>H</u>)</span>
<span class="t" style="left:258px;top:30px;font:12px/14px 'Liberation Sans','IPAGothic',sans-serif;color:#000;transform:scaleX(0.8021);">アルゴリズム取引</span>
<span class="t" style="left:372px;top:30px;font:12px/14px 'Liberation Sans','IPAGothic',sans-serif;color:#000;transform:scaleX(1.0000);">新規注文</span>
<span class="t" style="left:1071px;top:30px;font:11px/13px 'Liberation Sans','IPAGothic',sans-serif;color:#444;transform:scaleX(0.8507);">M1</span>
<span class="t" style="left:1101px;top:30px;font:11px/13px 'Liberation Sans','IPAGothic',sans-serif;color:#444;transform:scaleX(0.8507);">M5</span>
<span class="t" style="left:1131px;top:30px;font:11px/13px 'Liberation Sans','IPAGothic',sans-serif;color:#444;transform:scaleX(0.8876);">M15</span>
<span class="t" style="left:1162px;top:30px;font:11px/13px 'Liberation Sans','IPAGothic',sans-serif;color:#444;transform:scaleX(0.9343);">M30</span>
<span class="t" style="left:1198px;top:30px;font:11px/13px 'Liberation Sans','IPAGothic',sans-serif;color:#444;transform:scaleX(0.8533);">H1</span>
<span class="t" style="left:1229px;top:30px;font:11px/13px 'Liberation Sans','IPAGothic',sans-serif;color:#444;transform:scaleX(0.9244);">H4</span>
<span class="t" style="left:1264px;top:31px;font:11px/13px 'Liberation Sans','IPAGothic',sans-serif;color:#444;transform:scaleX(0.8533);">D1</span>
<span class="t" style="left:1292px;top:30px;font:11px/13px 'Liberation Sans','IPAGothic',sans-serif;color:#444;transform:scaleX(0.9091);">W1</span>
<span class="t" style="left:1324px;top:30px;font:11px/13px 'Liberation Sans','IPAGothic',sans-serif;color:#444;transform:scaleX(0.9352);">MN</span>
<span class="t" style="left:1497px;top:59px;font:9.4px/11px 'Liberation Sans','IPAGothic',sans-serif;color:#fff;transform:scaleX(0.9295);">127.130</span>
<span class="t" style="left:1497px;top:91px;font:9.4px/11px 'Liberation Sans','IPAGothic',sans-serif;color:#fff;transform:scaleX(0.9295);">126.730</span>
<span class="t" style="left:1497px;top:123px;font:9.4px/11px 'Liberation Sans','IPAGothic',sans-serif;color:#fff;transform:scaleX(0.9295);">126.330</span>
<span class="t" style="left:1497px;top:155px;font:9.4px/11px 'Liberation Sans','IPAGothic',sans-serif;color:#fff;transform:scaleX(0.9295);">125.930</span>
<span class="t" style="left:1497px;top:187px;font:9.4px/11px 'Liberation Sans','IPAGothic',sans-serif;color:#fff;transform:scaleX(0.9295);">125.530</span>
<span class="t" style="left:1497px;top:219px;font:9.4px/11px 'Liberation Sans','IPAGothic',sans-serif;color:#fff;transform:scaleX(0.9295);">125.130</span>
<span class="t" style="left:1497px;top:251px;font:9.4px/11px 'Liberation Sans','IPAGothic',sans-serif;color:#fff;transform:scaleX(0.9295);">124.730</span>
<span class="t" style="left:1497px;top:283px;font:9.4px/11px 'Liberation Sans','IPAGothic',sans-serif;color:#fff;transform:scaleX(0.9295);">124.330</span>
<span class="t" style="left:1497px;top:315px;font:9.4px/11px 'Liberation Sans','IPAGothic',sans-serif;color:#fff;transform:scaleX(0.9295);">123.930</span>
<span class="t" style="left:1497px;top:347px;font:9.4px/11px 'Liberation Sans','IPAGothic',sans-serif;color:#fff;transform:scaleX(0.9295);">123.530</span>
<span class="t" style="left:1497px;top:379px;font:9.4px/11px 'Liberation Sans','IPAGothic',sans-serif;color:#fff;transform:scaleX(0.9295);">123.130</span>
<span class="t" style="left:1497px;top:411px;font:9.4px/11px 'Liberation Sans','IPAGothic',sans-serif;color:#fff;transform:scaleX(0.9295);">122.730</span>
<span class="t" style="left:1497px;top:443px;font:9.4px/11px 'Liberation Sans','IPAGothic',sans-serif;color:#fff;transform:scaleX(0.9295);">122.330</span>
<span class="t" style="left:1497px;top:475px;font:9.4px/11px 'Liberation Sans','IPAGothic',sans-serif;color:#fff;transform:scaleX(0.9295);">121.930</span>
<span class="t" style="left:1497px;top:507px;font:9.4px/11px 'Liberation Sans','IPAGothic',sans-serif;color:#fff;transform:scaleX(0.9295);">121.530</span>
<span class="t" style="left:1497px;top:539px;font:9.4px/11px 'Liberation Sans','IPAGothic',sans-serif;color:#fff;transform:scaleX(0.9295);">121.130</span>
<span class="t" style="left:1497px;top:571px;font:9.4px/11px 'Liberation Sans','IPAGothic',sans-serif;color:#fff;transform:scaleX(0.9295);">120.730</span>
<span class="t" style="left:1497px;top:604px;font:9.4px/11px 'Liberation Sans','IPAGothic',sans-serif;color:#fff;transform:scaleX(0.9295);">120.330</span>
<span class="t" style="left:1497px;top:636px;font:9.4px/11px 'Liberation Sans','IPAGothic',sans-serif;color:#fff;transform:scaleX(0.9487);">119.930</span>
<span class="t" style="left:1497px;top:668px;font:9.4px/11px 'Liberation Sans','IPAGothic',sans-serif;color:#fff;transform:scaleX(0.9487);">119.530</span>
<span class="t" style="left:1497px;top:700px;font:9.4px/11px 'Liberation Sans','IPAGothic',sans-serif;color:#fff;transform:scaleX(0.9487);">119.130</span>
<span class="t" style="left:1497px;top:732px;font:9.4px/11px 'Liberation Sans','IPAGothic',sans-serif;color:#fff;transform:scaleX(0.9487);">118.730</span>
<span class="t" style="left:1497px;top:764px;font:9.4px/11px 'Liberation Sans','IPAGothic',sans-serif;color:#fff;transform:scaleX(0.9487);">118.330</span>
<span class="t" style="left:1497px;top:796px;font:9.4px/11px 'Liberation Sans','IPAGothic',sans-serif;color:#fff;transform:scaleX(0.9487);">117.930</span>
<span class="t" style="left:1497px;top:828px;font:9.4px/11px 'Liberation Sans','IPAGothic',sans-serif;color:#fff;transform:scaleX(0.9487);">117.530</span>
<span class="t" style="left:1497px;top:860px;font:9.4px/11px 'Liberation Sans','IPAGothic',sans-serif;color:#fff;transform:scaleX(0.9487);">117.130</span>
<span class="t" style="left:1497px;top:892px;font:9.4px/11px 'Liberation Sans','IPAGothic',sans-serif;color:#fff;transform:scaleX(0.9487);">116.730</span>
<span class="t" style="left:1497px;top:924px;font:9.4px/11px 'Liberation Sans','IPAGothic',sans-serif;color:#fff;transform:scaleX(0.9487);">116.330</span>
<span class="t" style="left:1497px;top:956px;font:9.4px/11px 'Liberation Sans','IPAGothic',sans-serif;color:#fff;transform:scaleX(0.9487);">115.930</span>
<span class="t" style="left:1497px;top:988px;font:9.4px/11px 'Liberation Sans','IPAGothic',sans-serif;color:#fff;transform:scaleX(0.9487);">115.530</span>
<span class="t" style="left:1497px;top:1020px;font:9.4px/11px 'Liberation Sans','IPAGothic',sans-serif;color:#fff;transform:scaleX(0.9487);">115.130</span>
<span class="t" style="left:1497px;top:1052px;font:9.4px/11px 'Liberation Sans','IPAGothic',sans-serif;color:#fff;transform:scaleX(0.9487);">114.730</span>
<span class="t" style="left:5px;top:1094px;font:9.3px/11px 'Liberation Sans','IPAGothic',sans-serif;color:#fff;">11 Jun 2019</span>
<span class="t" style="left:69px;top:1094px;font:9.3px/11px 'Liberation Sans','IPAGothic',sans-serif;color:#fff;">3 Jul 2019</span>
<span class="t" style="left:133px;top:1094px;font:9.3px/11px 'Liberation Sans','IPAGothic',sans-serif;color:#fff;">25 Jul 2019</span>
<span class="t" style="left:197px;top:1094px;font:9.3px/11px 'Liberation Sans','IPAGothic',sans-serif;color:#fff;">16 Aug 2019</span>
<span class="t" style="left:261px;top:1094px;font:9.3px/11px 'Liberation Sans','IPAGothic',sans-serif;color:#fff;">9 Sep 2019</span>
<span class="t" style="left:325px;top:1094px;font:9.3px/11px 'Liberation Sans','IPAGothic',sans-serif;color:#fff;">1 Oct 2019</span>
<span class="t" style="left:389px;top:1094px;font:9.3px/11px 'Liberation Sans','IPAGothic',sans-serif;color:#fff;">25 Oct 2019</span>
<span class="t" style="left:453px;top:1094px;font:9.3px/11px 'Liberation Sans','IPAGothic',sans-serif;color:#fff;">14 Nov 2019</span>
<span class="t" style="left:517px;top:1094px;font:9.3px/11px 'Liberation Sans','IPAGothic',sans-serif;color:#fff;">6 Dec 2019</span>
<span class="t" style="left:581px;top:1094px;font:9.3px/11px 'Liberation Sans','IPAGothic',sans-serif;color:#fff;">31 Dec 2019</span>
<span class="t" style="left:645px;top:1094px;font:9.3px/11px 'Liberation Sans','IPAGothic',sans-serif;color:#fff;">23 Jan 2020</span>
<span class="t" style="left:709px;top:1094px;font:9.3px/11px 'Liberation Sans','IPAGothic',sans-serif;color:#fff;">14 Feb 2020</span>
<span class="t" style="left:773px;top:1094px;font:9.3px/11px 'Liberation Sans','IPAGothic',sans-serif;color:#fff;">9 Mar 2020</span>
<span class="t" style="left:837px;top:1094px;font:9.3px/11px 'Liberation Sans','IPAGothic',sans-serif;color:#fff;">31 Mar 2020</span>
<span class="t" style="left:901px;top:1094px;font:9.3px/11px 'Liberation Sans','IPAGothic',sans-serif;color:#fff;">22 Apr 2020</span>
<span class="t" style="left:965px;top:1094px;font:9.3px/11px 'Liberation Sans','IPAGothic',sans-serif;color:#fff;">14 May 2020</span>
<span class="t" style="left:1029px;top:1094px;font:9.3px/11px 'Liberation Sans','IPAGothic',sans-serif;color:#fff;">5 Jun 2020</span>
<span class="t" style="left:1093px;top:1094px;font:9.3px/11px 'Liberation Sans','IPAGothic',sans-serif;color:#fff;">29 Jun 2020</span>
<span class="t" style="left:1157px;top:1094px;font:9.3px/11px 'Liberation Sans','IPAGothic',sans-serif;color:#fff;">21 Jul 2020</span>
<span class="t" style="left:1221px;top:1094px;font:9.3px/11px 'Liberation Sans','IPAGothic',sans-serif;color:#fff;">12 Aug 2020</span>
<span class="t" style="left:1285px;top:1094px;font:9.3px/11px 'Liberation Sans','IPAGothic',sans-serif;color:#fff;">3 Sep 2020</span>
<span class="t" style="left:1349px;top:1094px;font:9.3px/11px 'Liberation Sans','IPAGothic',sans-serif;color:#fff;">25 Sep 2020</span>
<span class="t" style="left:1413px;top:1094px;font:9.3px/11px 'Liberation Sans','IPAGothic',sans-serif;color:#fff;">19 Oct 2020</span>
<span class="t" style="left:1477px;top:1094px;font:9.3px/11px 'Liberation Sans','IPAGothic',sans-serif;color:#fff;">10 Nov 2020</span>
<span class="t" style="left:1497px;top:509px;font:9.4px/11px 'Liberation Sans','IPAGothic',sans-serif;color:#000;transform:scaleX(0.9295);z-index:4;">121.501</span>
<span class="t" style="left:1497px;top:581px;font:9.4px/11px 'Liberation Sans','IPAGothic',sans-serif;color:#000;transform:scaleX(0.9295);z-index:4;">120.601</span>
<span class="t" style="left:1497px;top:862px;font:9.4px/11px 'Liberation Sans','IPAGothic',sans-serif;color:#000;transform:scaleX(0.9487);z-index:4;">117.101</span>
<span class="t" style="left:1497px;top:1070px;font:9.4px/11px 'Liberation Sans','IPAGothic',sans-serif;color:#000;transform:scaleX(0.9487);z-index:4;">114.501</span>
<span class="t" style="left:361px;top:1094px;font:9.3px/11px 'Liberation Sans','IPAGothic',sans-serif;color:#000;transform:scaleX(0.9946);z-index:4;">2019.10.25 00:00</span>
<span class="t" style="left:981px;top:1094px;font:9.3px/11px 'Liberation Sans','IPAGothic',sans-serif;color:#000;transform:scaleX(0.9946);z-index:4;">2020.06.02 17:29</span>
<span class="t" style="left:46px;top:60px;font:9.3px/11px 'Liberation Sans','IPAGothic',sans-serif;color:#fff;transform:scaleX(1.0149);">EURJPY, Daily:  Euro vs Yen  126.773 126.988 126.668 126.915</span>
<span class="t" style="left:24px;top:1121px;font:12px/14px 'Liberation Sans','IPAGothic',sans-serif;color:#000;transform:scaleX(0.9167);">時間</span>
<span class="t" style="left:183px;top:1121px;font:12px/14px 'Liberation Sans','IPAGothic',sans-serif;color:#000;transform:scaleX(0.7222);">ソース</span>
<span class="t" style="left:363px;top:1121px;font:12px/14px 'Liberation Sans','IPAGothic',sans-serif;color:#000;transform:scaleX(0.7333);">メッセージ</span>
<span class="t" style="left:38px;top:1144px;font:11px/13px 'Liberation Sans','IPAGothic',sans-serif;color:#000;transform:scaleX(0.9727);">2020.12.29 13:03:13.567</span>
<span class="t" style="left:180px;top:1144px;font:11px/13px 'Liberation Sans','IPAGothic',sans-serif;color:#000;transform:scaleX(0.9748);">Kuru2Trap (EURJPY,D1)</span>
<span class="t" style="left:360px;top:1144px;font:11.67px/14px 'Liberation Mono','IPAGothic',monospace;color:#000;">************************************************************</span>
<span class="t" style="left:38px;top:1164px;font:11px/13px 'Liberation Sans','IPAGothic',sans-serif;color:#000;transform:scaleX(0.9727);">2020.12.29 13:03:14.126</span>
<span class="t" style="left:180px;top:1164px;font:11px/13px 'Liberation Sans','IPAGothic',sans-serif;color:#000;transform:scaleX(0.9748);">Kuru2Trap (EURJPY,D1)</span>
<span class="t" style="left:360px;top:1164px;font:11.67px/14px 'Liberation Mono','IPAGothic',monospace;color:#000;">KuruKuru_std KasouTatene=true TrapToHedge=0 HedgeHours=9,13,18,22</span>
<span class="t" style="left:38px;top:1184px;font:11px/13px 'Liberation Sans','IPAGothic',sans-serif;color:#000;transform:scaleX(0.9727);">2020.12.29 13:03:14.126</span>
<span class="t" style="left:180px;top:1184px;font:11px/13px 'Liberation Sans','IPAGothic',sans-serif;color:#000;transform:scaleX(0.9748);">Kuru2Trap (EURJPY,D1)</span>
<span class="t" style="left:360px;top:1184px;font:11.67px/14px 'Liberation Mono','IPAGothic',monospace;color:#000;">Long Open=120.601 Close=121.501(0.9) Lots=70000</span>
<span class="t" style="left:38px;top:1204px;font:11px/13px 'Liberation Sans','IPAGothic',sans-serif;color:#000;transform:scaleX(0.9727);">2020.12.29 13:03:14.126</span>
<span class="t" style="left:180px;top:1204px;font:11px/13px 'Liberation Sans','IPAGothic',sans-serif;color:#000;transform:scaleX(0.9748);">Kuru2Trap (EURJPY,D1)</span>
<span class="t" style="left:360px;top:1204px;font:11.67px/14px 'Liberation Mono','IPAGothic',monospace;color:#000;">Tatene=115.271 Goal=121.501 FirstTrap=114.501 Range=7(7)</span>
<span class="t" style="left:38px;top:1224px;font:11px/13px 'Liberation Sans','IPAGothic',sans-serif;color:#000;transform:scaleX(0.9727);">2020.12.29 13:03:14.126</span>
<span class="t" style="left:180px;top:1224px;font:11px/13px 'Liberation Sans','IPAGothic',sans-serif;color:#000;transform:scaleX(0.9748);">Kuru2Trap (EURJPY,D1)</span>
<span class="t" style="left:360px;top:1224px;font:11.67px/14px 'Liberation Mono','IPAGothic',monospace;color:#000;">TrapTotal=70 TP=0.5 Wide=0.1(0.1)</span>
<span class="t" style="left:38px;top:1244px;font:11px/13px 'Liberation Sans','IPAGothic',sans-serif;color:#000;transform:scaleX(0.9727);">2020.12.29 13:03:14.126</span>
<span class="t" style="left:180px;top:1244px;font:11px/13px 'Liberation Sans','IPAGothic',sans-serif;color:#000;transform:scaleX(0.9748);">Kuru2Trap (EURJPY,D1)</span>
<span class="t" style="left:360px;top:1244px;font:11.67px/14px 'Liberation Mono','IPAGothic',monospace;color:#000;">Total  815070 / -437744 (960)</span>
<span class="t" style="left:38px;top:1264px;font:11px/13px 'Liberation Sans','IPAGothic',sans-serif;color:#000;transform:scaleX(0.9727);">2020.12.29 13:03:14.126</span>
<span class="t" style="left:180px;top:1264px;font:11px/13px 'Liberation Sans','IPAGothic',sans-serif;color:#000;transform:scaleX(0.9748);">Kuru2Trap (EURJPY,D1)</span>
<span class="t" style="left:360px;top:1264px;font:11.67px/14px 'Liberation Mono','IPAGothic',monospace;color:#000;">Hontai 63000 / 0 (1-0)</span>
<span class="t" style="left:38px;top:1284px;font:11px/13px 'Liberation Sans','IPAGothic',sans-serif;color:#000;transform:scaleX(0.9727);">2020.12.29 13:03:14.126</span>
<span class="t" style="left:180px;top:1284px;font:11px/13px 'Liberation Sans','IPAGothic',sans-serif;color:#000;transform:scaleX(0.9748);">Kuru2Trap (EURJPY,D1)</span>
<span class="t" style="left:360px;top:1284px;font:11.67px/14px 'Liberation Mono','IPAGothic',monospace;color:#000;">Trap1  379000 / 0 (758-0)</span>
<span class="t" style="left:38px;top:1304px;font:11px/13px 'Liberation Sans','IPAGothic',sans-serif;color:#000;transform:scaleX(0.9727);">2020.12.29 13:03:14.126</span>
<span class="t" style="left:180px;top:1304px;font:11px/13px 'Liberation Sans','IPAGothic',sans-serif;color:#000;transform:scaleX(0.9748);">Kuru2Trap (EURJPY,D1)</span>
<span class="t" style="left:360px;top:1304px;font:11.67px/14px 'Liberation Mono','IPAGothic',monospace;color:#000;">Trap2  0 / -248474 (0-70)</span>
<span class="t" style="left:38px;top:1324px;font:11px/13px 'Liberation Sans','IPAGothic',sans-serif;color:#000;transform:scaleX(0.9727);">2020.12.29 13:03:14.126</span>
<span class="t" style="left:180px;top:1324px;font:11px/13px 'Liberation Sans','IPAGothic',sans-serif;color:#000;transform:scaleX(0.9748);">Kuru2Trap (EURJPY,D1)</span>
<span class="t" style="left:360px;top:1324px;font:11.67px/14px 'Liberation Mono','IPAGothic',monospace;color:#000;">Hedge1 373070 / 0 (130-0)</span>
<span class="t" style="left:38px;top:1344px;font:11px/13px 'Liberation Sans','IPAGothic',sans-serif;color:#000;transform:scaleX(0.9727);">2020.12.29 13:03:14.126</span>
<span class="t" style="left:180px;top:1344px;font:11px/13px 'Liberation Sans','IPAGothic',sans-serif;color:#000;transform:scaleX(0.9748);">Kuru2Trap (EURJPY,D1)</span>
<span class="t" style="left:360px;top:1344px;font:11.67px/14px 'Liberation Mono','IPAGothic',monospace;color:#000;">Hedge2 0 / -189270 (0-1)</span>
<span class="t" style="left:30px;top:1371px;font:12px/14px 'Liberation Sans','IPAGothic',sans-serif;color:#606060;transform:scaleX(0.9167);">取引</span>
<span class="t" style="left:74px;top:1371px;font:12px/14px 'Liberation Sans','IPAGothic',sans-serif;color:#606060;transform:scaleX(0.9792);">運用比率</span>
<span class="t" style="left:142px;top:1371px;font:12px/14px 'Liberation Sans','IPAGothic',sans-serif;color:#606060;transform:scaleX(0.9792);">口座履歴</span>
<span class="t" style="left:210px;top:1371px;font:12px/14px 'Liberation Sans','IPAGothic',sans-serif;color:#606060;transform:scaleX(0.6667);">ニュース</span>
<span class="t" style="left:263px;top:1371px;font:12px/14px 'Liberation Sans','IPAGothic',sans-serif;color:#606060;transform:scaleX(0.8000);">受信トレイ</span>
<span class="t" style="left:341px;top:1371px;font:12px/14px 'Liberation Sans','IPAGothic',sans-serif;color:#606060;transform:scaleX(0.7976);">指標カレンダー</span>
<span class="t" style="left:429px;top:1371px;font:12px/14px 'Liberation Sans','IPAGothic',sans-serif;color:#606060;transform:scaleX(0.9167);">会社</span>
<span class="t" style="left:472px;top:1371px;font:12px/14px 'Liberation Sans','IPAGothic',sans-serif;color:#606060;transform:scaleX(0.7000);">マーケット</span>
<span class="t" style="left:534px;top:1371px;font:12px/14px 'Liberation Sans','IPAGothic',sans-serif;color:#606060;transform:scaleX(0.6875);">アラート</span>
<span class="t" style="left:588px;top:1371px;font:12px/14px 'Liberation Sans','IPAGothic',sans-serif;color:#606060;transform:scaleX(0.7708);">シグナル</span>
<span class="t" style="left:646px;top:1371px;font:12px/14px 'Liberation Sans','IPAGothic',sans-serif;color:#606060;transform:scaleX(0.9167);">記事</span>
<span class="t" style="left:695px;top:1371px;font:12px/14px 'Liberation Sans','IPAGothic',sans-serif;color:#606060;transform:scaleX(0.7167);">ライブラリ</span>
<span class="t" style="left:757px;top:1371px;font:12px/14px 'Liberation Sans','IPAGothic',sans-serif;color:#606060;transform:scaleX(0.8328);">VPS</span>
<span class="t" style="left:871px;top:1371px;font:12px/14px 'Liberation Sans','IPAGothic',sans-serif;color:#606060;transform:scaleX(0.8542);">操作ログ</span>
<span class="t" style="left:315px;top:1377px;font:10px/12px 'Liberation Sans','IPAGothic',sans-serif;color:#e02020;font-weight:bold;">7</span>
<span class="t" style="left:671px;top:1377px;font:10px/12px 'Liberation Sans','IPAGothic',sans-serif;color:#e02020;font-weight:bold;">1</span>
<span class="t" style="left:797px;top:1371px;font:12px/14px 'Liberation Sans','IPAGothic',sans-serif;color:#000;transform:scaleX(0.7361);">エキスパート</span>
<span class="t" style="left:2px;top:1389px;font:12px/12px 'Liberation Sans','IPAGothic',sans-serif;color:#000;transform:rotate(-90deg) scaleX(0.7619);transform-origin:0 0;">ツールボックス</span>
<span class="t" style="left:1439px;top:1371px;font:12px/14px 'Liberation Sans','IPAGothic',sans-serif;color:#000;transform:scaleX(0.7250);">ストラテジーテスター</span>
</body></html>
